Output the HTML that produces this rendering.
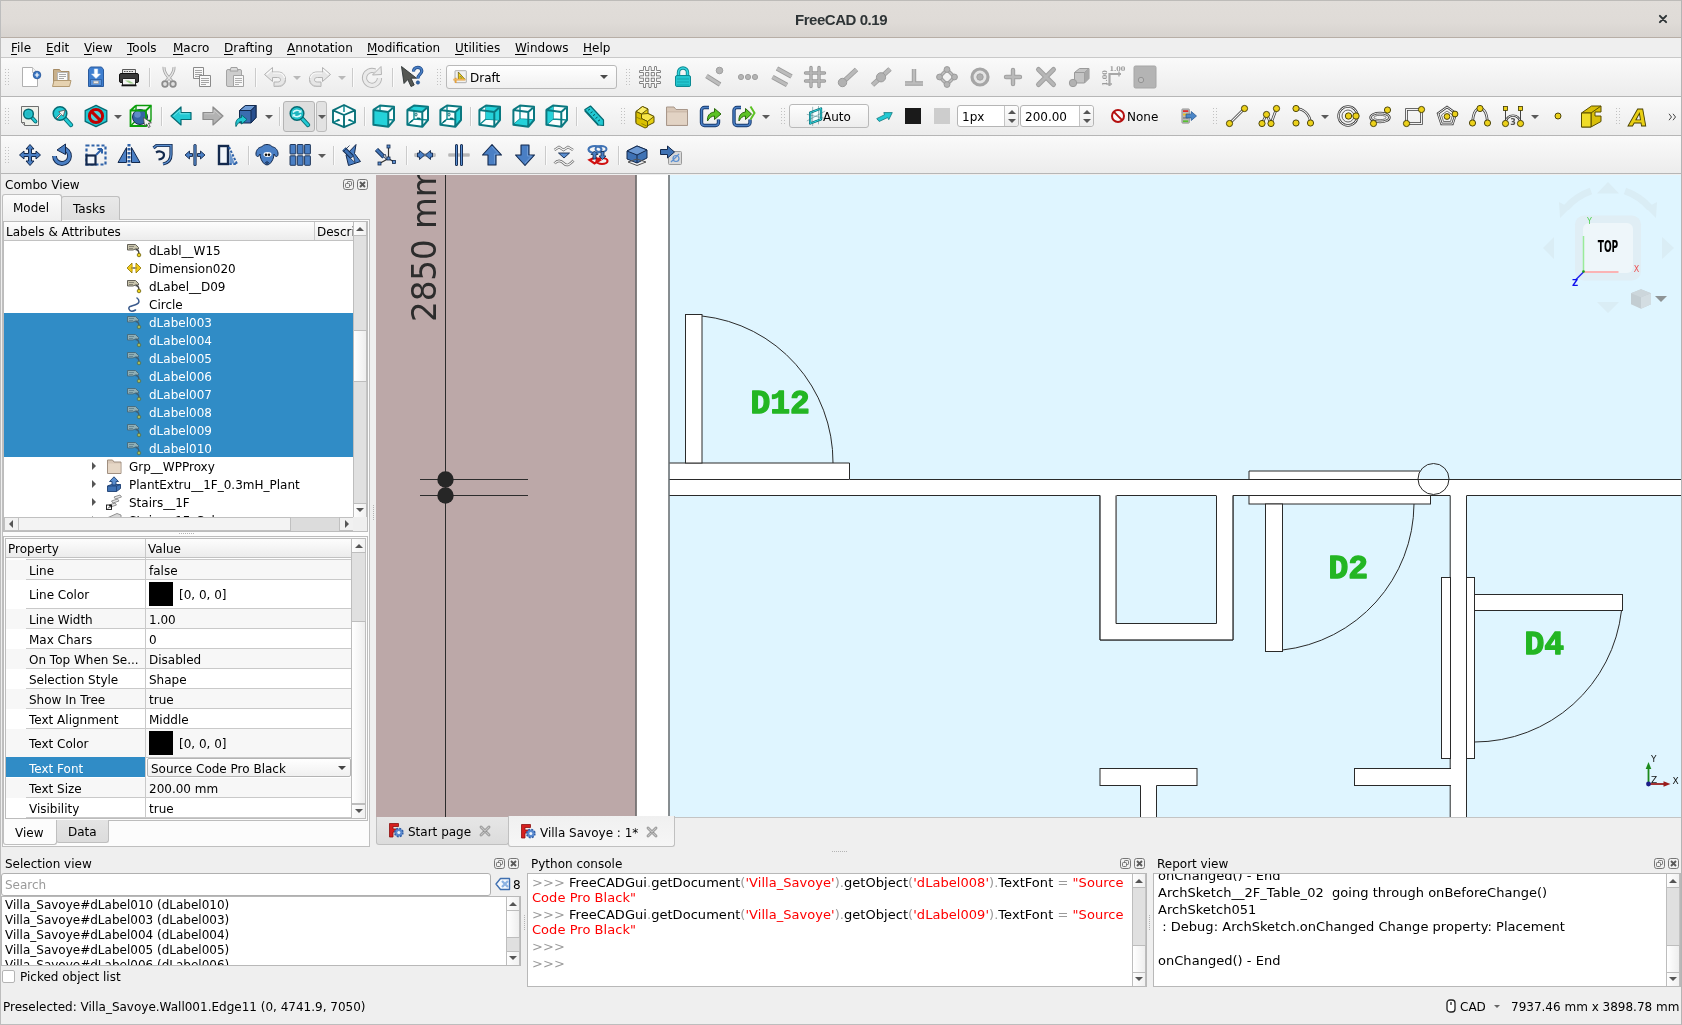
<!DOCTYPE html>
<html lang="en"><head><meta charset="utf-8"><title>FreeCAD 0.19</title>
<style>
*{box-sizing:border-box;margin:0;padding:0}
html,body{width:1682px;height:1025px;overflow:hidden;background:#efefef}
body{position:relative;font-family:"DejaVu Sans","Liberation Sans",sans-serif;font-size:12px;color:#000;line-height:15px;-webkit-font-smoothing:antialiased}
#wrap{position:absolute;left:0;top:0;width:1682px;height:1025px;overflow:hidden;will-change:transform}
.a{position:absolute}
.t{position:absolute;white-space:pre;line-height:15px;height:15px}
u{text-decoration:underline;text-underline-offset:1.5px;text-decoration-thickness:1px}
#title{left:0;top:0;width:1682px;height:38px;background:linear-gradient(#e1ddd9 0,#dfdbd7 60%,#d7d3cf 100%);border-top:1px solid #bdbbb8;border-bottom:1px solid #b7aea6}
#title .tt{left:0;width:1682px;top:10px;text-align:center;font-family:"Liberation Sans","DejaVu Sans",sans-serif;font-weight:bold;font-size:15px;letter-spacing:-0.45px;color:#2e3436;line-height:18px;height:18px}
#menubar{left:0;top:38px;width:1682px;height:20px;background:#efefef;border-bottom:1px solid #c9c9c9}
.tb{left:0;width:1682px;height:39px;background:linear-gradient(#fafafa,#ececec);border-bottom:1px solid #b6b6b6}
.sep{position:absolute;width:2px;height:19px;border-left:1px solid #cbcbcb;border-right:1px solid #fbfbfb}
.hd{position:absolute;width:5px;height:17px;background-image:linear-gradient(90deg,#c2c2c2 1px,transparent 1px,transparent 3px,#c2c2c2 3px,#c2c2c2 4px,transparent 4px);-webkit-mask-image:repeating-linear-gradient(#000 0,#000 1px,transparent 1px,transparent 3px);mask-image:repeating-linear-gradient(#000 0,#000 1px,transparent 1px,transparent 3px)}
.ic{position:absolute;width:24px;height:24px;overflow:visible}
.dd{position:absolute;width:0;height:0;border-left:4px solid transparent;border-right:4px solid transparent;border-top:4px solid #5a5a5a}
.wb{position:absolute;left:0;top:0;width:1682px;height:1025px;border-left:1px solid #bdbdbd;border-right:1px solid #b4b4b4;border-bottom:1px solid #bdbdbd;pointer-events:none;z-index:50}
.btn{position:absolute;border:1px solid #b9b9b9;border-radius:3px;background:linear-gradient(#fefefe,#ededed)}
.inp{position:absolute;border:1px solid #b5b5b5;border-radius:3px;background:#fff}
.frame{position:absolute;border:1px solid #bcbcbc;background:#fff}
</style></head>
<body>
<div id="wrap">
<div id="title" class="a">
<div class="t tt">FreeCAD 0.19</div>
<svg class="a" style="left:1658.2px;top:13.1px" width="10" height="10" viewBox="0 0 10 10"><path d="M1.9 1.9L8.1 8.1M8.1 1.9L1.9 8.1" stroke="#2e3436" stroke-width="2" stroke-linecap="round" fill="none"/></svg></div>
<div id="menubar" class="a">
<span class="t" style="left:11px;top:3px"><u>F</u>ile</span>
<span class="t" style="left:46px;top:3px"><u>E</u>dit</span>
<span class="t" style="left:84px;top:3px"><u>V</u>iew</span>
<span class="t" style="left:127px;top:3px"><u>T</u>ools</span>
<span class="t" style="left:173px;top:3px"><u>M</u>acro</span>
<span class="t" style="left:224px;top:3px"><u>D</u>rafting</span>
<span class="t" style="left:287px;top:3px"><u>A</u>nnotation</span>
<span class="t" style="left:367px;top:3px"><u>M</u>odification</span>
<span class="t" style="left:455px;top:3px"><u>U</u>tilities</span>
<span class="t" style="left:515px;top:3px"><u>W</u>indows</span>
<span class="t" style="left:583px;top:3px"><u>H</u>elp</span></div>
<div class="tb a" style="top:58px">
<div class="hd" style="left:5.0px;top:11.0px"></div>
<svg class="ic" style="left:18.0px;top:7.0px;width:24px;height:24px" viewBox="0 0 24 24"><path d="M4.500 2.500h10l5 5v14h-15z" fill="#fff" stroke="#b0b0b0"/><path d="M14.500 2.500v5h5" fill="#f2f2f2" stroke="#c0c0c0"/><circle cx="19" cy="10" r="3.800" fill="#3b78c4" stroke="#1f4f96" stroke-width=".8"/><path d="M19 7.800v4.400M16.800 10h4.400" stroke="#fff" stroke-width="1.200"/></svg>
<svg class="ic" style="left:50.0px;top:7.0px;width:24px;height:24px" viewBox="0 0 24 24"><path d="M3.5 20.5v-16h6l1.5 2h8v14z" fill="#c8b08c" stroke="#a58b66"/><path d="M7.5 7.5h10v9h-10z" fill="#fafafa" stroke="#b9b9b9"/><path d="M9 9.500h7M9 11.500h7M9 13.500h5" fill="none" stroke="#a8a8a8" stroke-width="1"/><path d="M2.5 21.5l1.5-6h17l-1.500 6z" fill="#e6d2b0" stroke="#b39a72"/></svg>
<svg class="ic" style="left:84.0px;top:7.0px;width:24px;height:24px" viewBox="0 0 24 24"><path d="M4.5 4.500l2-2.500h11l2 2.500v17h-15z" fill="#3f7fd0" stroke="#2a5a9c"/><path d="M6.5 14.500h11v6h-11z" fill="#5b95dd" stroke="#2a5a9c" stroke-width=".8"/><path d="M9.500 16h5v2.500h-5z" fill="#e8e8e8" stroke="#9a9a9a" stroke-width=".7"/><path d="M10.300 4h3.400v5h2.800l-4.500 4.500l-4.500-4.500h2.800z" fill="#fff" stroke="#d8e6f6" stroke-width=".5"/></svg>
<svg class="ic" style="left:117.0px;top:7.0px;width:24px;height:24px" viewBox="0 0 24 24"><path d="M5.500 4.500h13v5h-13z" fill="#e6e6e6" stroke="#5a5a5a"/><path d="M7 6.500h10" stroke="#555" stroke-width="1.2" stroke-dasharray="1.500 1"/><rect x="2.500" y="8.500" width="19" height="9" rx="1.500" fill="#3a3a3a" stroke="#111"/><path d="M5.500 13.500h13v6.500h-13z" fill="#f4f4f4" stroke="#222"/><path d="M8 15.500l5 3h4l-5-3z" fill="#9fd08a"/><path d="M4.500 20.500h15" stroke="#111" stroke-width="1.6"/></svg>
<div class="sep" style="left:149.0px;top:10.0px"></div>
<svg class="ic" style="left:157.0px;top:7.0px;width:24px;height:24px" viewBox="0 0 24 24"><path d="M7 2c-.5 4 2.500 9 8 14M17 2c.5 4-2.500 9-8 14" fill="none" stroke="#9e9e9e" stroke-width="3"/><path d="M7 2c-.5 4 2.500 9 8 14M17 2c.5 4-2.500 9-8 14" fill="none" stroke="#e4e4e4" stroke-width="1.400"/><circle cx="8" cy="19" r="2.800" fill="#e0e0e0" stroke="#8c8c8c" stroke-width="1.800"/><circle cx="16" cy="19" r="2.800" fill="#e0e0e0" stroke="#8c8c8c" stroke-width="1.800"/></svg>
<svg class="ic" style="left:190.0px;top:7.0px;width:24px;height:24px" viewBox="0 0 24 24"><path d="M3.500 2.500h10v11h-10z" fill="#f8f8f8" stroke="#8a8a8a"/><path d="M5 5.500h7M5 7.500h7M5 9.500h7M5 11.500h4" fill="none" stroke="#a4a4a4" stroke-width="1"/><path d="M9.500 10.500h11v11h-11z" fill="#f8f8f8" stroke="#8a8a8a"/><path d="M11 13.500h8M11 15.500h8M11 17.500h8M11 19.500h5" fill="none" stroke="#a4a4a4" stroke-width="1"/></svg>
<svg class="ic" style="left:223.0px;top:7.0px;width:24px;height:24px" viewBox="0 0 24 24"><rect x="3.500" y="4.500" width="15" height="17" rx="1.500" fill="#cdcdcd" stroke="#a4a4a4"/><path d="M8 2.500h6l1 3.500h-8z" fill="#dcdcdc" stroke="#a0a0a0"/><path d="M10.500 10.500h10v11h-10z" fill="#f8f8f8" stroke="#a2a2a2"/><path d="M12 13.500h7M12 15.500h7M12 17.500h7M12 19.500h4" fill="none" stroke="#b0b0b0" stroke-width="1"/></svg>
<div class="sep" style="left:254.5px;top:10.0px"></div>
<svg class="ic" style="left:263.0px;top:7.0px;width:24px;height:24px" viewBox="0 0 24 24"><path d="M9.500 2.500L1.500 9.500L9.500 16.500V12.500H14.500C16.500 12.500 17.500 13.300 17.500 14.800S16.500 17 14.500 17H11V21.500H15C19.500 21.500 22.500 19 22.500 14.500S19.500 7 15 7H9.500Z" fill="#e6e6e6" stroke="#b2b2b2" stroke-width="1" stroke-linejoin="round"/><path d="M9 4.500l-5.500 5M10 8h5c3.500 0 6 2 6.500 5" fill="none" stroke="#fbfbfb" stroke-width="1.200"/><path d="M11.500 21h3.500c4 0 6.500-2 7-5.500" fill="none" stroke="#c6c6c6" stroke-width="1.200"/></svg>
<div class="dd" style="left:293.0px;top:17.5px;border-top-color:#b9b9b9"></div>
<svg class="ic" style="left:308.0px;top:7.0px;width:24px;height:24px" viewBox="0 0 24 24"><g transform="translate(24 0) scale(-1 1)"><path d="M9.500 2.500L1.500 9.500L9.500 16.500V12.500H14.500C16.500 12.500 17.500 13.300 17.500 14.800S16.500 17 14.500 17H11V21.500H15C19.500 21.500 22.500 19 22.500 14.500S19.500 7 15 7H9.500Z" fill="#e6e6e6" stroke="#b2b2b2" stroke-width="1" stroke-linejoin="round"/><path d="M9 4.500l-5.500 5M10 8h5c3.500 0 6 2 6.500 5" fill="none" stroke="#fbfbfb" stroke-width="1.200"/><path d="M11.500 21h3.500c4 0 6.500-2 7-5.500" fill="none" stroke="#c6c6c6" stroke-width="1.200"/></g></svg>
<div class="dd" style="left:338.0px;top:17.5px;border-top-color:#b9b9b9"></div>
<div class="sep" style="left:352.0px;top:10.0px"></div>
<svg class="ic" style="left:360.0px;top:7.0px;width:24px;height:24px" viewBox="0 0 24 24"><path d="M19.500 13a7.500 7.500 0 1 1-4.500-7" fill="none" stroke="#b4b4b4" stroke-width="5.200"/><path d="M19.500 13a7.500 7.500 0 1 1-4.500-7" fill="none" stroke="#eaeaea" stroke-width="3.400"/><path d="M12.500 10l9-.5l-.5-8z" fill="#eaeaea" stroke="#b4b4b4" stroke-width="1" stroke-linejoin="round"/></svg>
<div class="sep" style="left:392.0px;top:10.0px"></div>
<svg class="ic" style="left:399.0px;top:7.0px;width:24px;height:24px" viewBox="0 0 24 24"><path d="M2.500 1.500l2.500 17l3.800-4l3.200 7l3.200-1.500l-3.200-6.800h5.500z" fill="#555753" stroke="#2e3436" stroke-width=".9" stroke-linejoin="round"/><path d="M14.500 6.500c0-2.600 1.800-4.200 4.200-4.200s4.100 1.500 4.100 3.700c0 3.200-3.900 3.200-3.900 7.500" fill="none" stroke="#1f4a87" stroke-width="3.200"/><path d="M14.500 6.500c0-2.600 1.800-4.200 4.200-4.200s4.100 1.500 4.100 3.700c0 3.200-3.900 3.200-3.900 7.500" fill="none" stroke="#4a7fc4" stroke-width="1.700"/><circle cx="18.900" cy="17.500" r="1.700" fill="#3465a4" stroke="#1f4a87" stroke-width=".6"/></svg>
<div class="hd" style="left:437.0px;top:11.0px"></div>
<div class="btn" style="left:446px;top:7px;width:171px;height:24px;background:linear-gradient(#ffffff,#f0f0f0)">
<svg class="a" style="left:5px;top:3px" width="16" height="16" viewBox="0 0 24 24"><rect x="4.500" y="2.500" width="17" height="18" rx="1" fill="#f1f1f1" stroke="#8c8c8c"/><path d="M9.500 4.500v11h10z" fill="#f4d31c" stroke="#5a4f00" stroke-width="1"/><path d="M12.300 10.500v3h2.800z" fill="#fff" stroke="#5a4f00" stroke-width=".7"/><path d="M2 16h18M5.500 13v8" stroke="#e6a23c" stroke-width="2.600"/><path d="M2 16h18" stroke="#f6c98a" stroke-width=".8"/></svg>
<span class="t" style="left:23px;top:5px">Draft</span>
<div class="dd" style="left:153px;top:9px;border-left-width:4px;border-right-width:4px;border-top-width:4px;border-top-color:#4a4a4a"></div></div>
<div class="hd" style="left:626.0px;top:11.0px"></div>
<svg class="ic" style="left:638.0px;top:7.0px;width:24px;height:24px" viewBox="0 0 24 24"><path d="M6.500 2.500v19M12 2.500v19M17.500 2.500v19M2.500 6.500h19M2.500 12h19M2.500 17.500h19" stroke="#5c5c5c" stroke-width="3" stroke-linecap="round"/><path d="M6.500 2.500v19M12 2.500v19M17.500 2.500v19M2.500 6.500h19M2.500 12h19M2.500 17.500h19" stroke="#fbfbfb" stroke-width="1.600" stroke-linecap="round"/></svg>
<svg class="ic" style="left:671.0px;top:7.0px;width:24px;height:24px" viewBox="0 0 24 24"><path d="M7.500 11v-3.500a4.500 4.500 0 0 1 9 0v3.500" fill="none" stroke="#0b8a93" stroke-width="3.400"/><path d="M7.500 11v-3.500a4.500 4.500 0 0 1 9 0v3.500" fill="none" stroke="#35d6df" stroke-width="1.600"/><rect x="4.500" y="10.500" width="15" height="11" rx="1.500" fill="#23c6cf" stroke="#0b8a93"/><path d="M6 14h12M6 17h12M6 20h12" stroke="#14a5ae" stroke-width="1"/></svg>
<svg class="ic" style="left:703.0px;top:7.0px;width:24px;height:24px" viewBox="0 0 24 24"><path d="M3.500 11l13.500 8.500" stroke="#9a9a9a" stroke-width="4.800" stroke-linecap="butt"/><path d="M3.500 11l13.500 8.500" stroke="#bdbdbd" stroke-width="3"/><circle cx="16.500" cy="5.500" r="3.300" fill="#b5b5b5" stroke="#a0a0a0"/></svg>
<svg class="ic" style="left:736.0px;top:7.0px;width:24px;height:24px" viewBox="0 0 24 24"><circle cx="5" cy="12" r="2.600" fill="#b5b5b5" stroke="#a0a0a0"/><circle cx="12" cy="12" r="2.600" fill="#b5b5b5" stroke="#a0a0a0"/><circle cx="19" cy="12" r="2.600" fill="#b5b5b5" stroke="#a0a0a0"/></svg>
<svg class="ic" style="left:770.0px;top:7.0px;width:24px;height:24px" viewBox="0 0 24 24"><path d="M7 3.500l14.500 8M2.500 12l14.500 8" stroke="#9c9c9c" stroke-width="4.800"/><path d="M7 3.500l14.500 8M2.500 12l14.500 8" stroke="#bcbcbc" stroke-width="3"/></svg>
<svg class="ic" style="left:803.0px;top:7.0px;width:24px;height:24px" viewBox="0 0 24 24"><path d="M8 2.500v19M16 2.500v19M2.500 8h19M2.500 16h19" stroke="#9a9a9a" stroke-width="3.400" stroke-linecap="round"/><path d="M8 2.500v19M16 2.500v19M2.500 8h19M2.500 16h19" stroke="#b8b8b8" stroke-width="1.600" stroke-linecap="round"/></svg>
<svg class="ic" style="left:836.0px;top:7.0px;width:24px;height:24px" viewBox="0 0 24 24"><path d="M7 17l13.500-12.500" stroke="#9c9c9c" stroke-width="5"/><path d="M7 17l13.500-12.500" stroke="#b9b9b9" stroke-width="3.200"/><circle cx="6.500" cy="17.500" r="4.200" fill="#b2b2b2" stroke="#9c9c9c"/></svg>
<svg class="ic" style="left:869.0px;top:7.0px;width:24px;height:24px" viewBox="0 0 24 24"><path d="M3.500 20l17.500-16" stroke="#9c9c9c" stroke-width="5"/><path d="M3.500 20l17.500-16" stroke="#b9b9b9" stroke-width="3.200"/><circle cx="12" cy="12.300" r="4.600" fill="#b2b2b2" stroke="#9c9c9c"/></svg>
<svg class="ic" style="left:902.0px;top:7.0px;width:24px;height:24px" viewBox="0 0 24 24"><path d="M12 4v14M3 18.500h18" stroke="#9c9c9c" stroke-width="4.400"/><path d="M12 4v14M3 18.500h18" stroke="#bcbcbc" stroke-width="2.600"/></svg>
<svg class="ic" style="left:935.0px;top:7.0px;width:24px;height:24px" viewBox="0 0 24 24"><path d="M12 4.500l7.500 7.500l-7.500 7.500l-7.500-7.500z" fill="none" stroke="#9c9c9c" stroke-width="3.400"/><path d="M12 4.500l7.500 7.500l-7.500 7.500l-7.500-7.500z" fill="none" stroke="#bdbdbd" stroke-width="1.600"/><circle cx="12" cy="4.500" r="2.900" fill="#b5b5b5" stroke="#9c9c9c"/><circle cx="19.500" cy="12" r="2.900" fill="#b5b5b5" stroke="#9c9c9c"/><circle cx="12" cy="19.500" r="2.900" fill="#b5b5b5" stroke="#9c9c9c"/><circle cx="4.500" cy="12" r="2.900" fill="#b5b5b5" stroke="#9c9c9c"/></svg>
<svg class="ic" style="left:968.0px;top:7.0px;width:24px;height:24px" viewBox="0 0 24 24"><circle cx="12" cy="12" r="8" fill="#e4e4e4" stroke="#a6a6a6" stroke-width="3.200"/><circle cx="12" cy="12" r="3.200" fill="#b0b0b0" stroke="#a0a0a0"/></svg>
<svg class="ic" style="left:1001.0px;top:7.0px;width:24px;height:24px" viewBox="0 0 24 24"><path d="M12 5v14M5 12h14" stroke="#a0a0a0" stroke-width="4.400" stroke-linecap="round"/><path d="M12 5v14M5 12h14" stroke="#bababa" stroke-width="2.400" stroke-linecap="round"/></svg>
<svg class="ic" style="left:1034.0px;top:7.0px;width:24px;height:24px" viewBox="0 0 24 24"><path d="M4.500 4.500l15 15M19.500 4.500l-15 15" stroke="#a0a0a0" stroke-width="5" stroke-linecap="round"/><path d="M4.500 4.500l15 15M19.500 4.500l-15 15" stroke="#b6b6b6" stroke-width="3" stroke-linecap="round"/></svg>
<svg class="ic" style="left:1067.0px;top:7.0px;width:24px;height:24px" viewBox="0 0 24 24"><path d="M7.500 7.500l5-4h9.500v10l-4.500 4.500h-10z" fill="#c4c4c4" stroke="#9a9a9a"/><path d="M7.500 7.500h10v10.500M17.500 7.500l4.500-4" fill="none" stroke="#9a9a9a"/><path d="M17.500 7.500l4.500-4v10l-4.500 4.500z" fill="#a8a8a8"/><circle cx="6" cy="18" r="3.700" fill="#b2b2b2" stroke="#9c9c9c"/></svg>
<svg class="ic" style="left:1100.0px;top:7.0px;width:24px;height:24px" viewBox="0 0 24 24"><path d="M9.500 21v-12h11.500M9.500 9l0 0" fill="none" stroke="#a8a8a8" stroke-width="2.200"/><path d="M7 19h5M19 6.500v5" stroke="#a8a8a8" stroke-width="1.400"/><text x="9.500" y="6" font-size="6.500" font-weight="bold" fill="#9a9a9a" font-family="DejaVu Serif,Liberation Serif,serif">1.00</text><text transform="translate(6.500 21) rotate(-90)" font-size="6.500" font-weight="bold" fill="#9a9a9a" font-family="DejaVu Serif,Liberation Serif,serif">1.00</text></svg>
<svg class="ic" style="left:1133.0px;top:7.0px;width:24px;height:24px" viewBox="0 0 24 24"><rect x="1" y="1" width="22" height="22" rx="1.500" fill="#b4b4b4" stroke="#a6a6a6"/><circle cx="8" cy="15" r="2.700" fill="#bdbdbd" stroke="#8e8e8e" stroke-width=".9"/></svg></div>
<div class="tb a" style="top:97px">
<div class="hd" style="left:5.0px;top:11.0px"></div>
<svg class="ic" style="left:18.0px;top:7.0px;width:24px;height:24px" viewBox="0 0 24 24"><path d="M3.500 2.500h17v19h-14l-3-3z" fill="#eef0ea" stroke="#6f6f6f"/><path d="M3.500 18.500h3v3" fill="#d0d0d0" stroke="#6f6f6f"/><path d="M13.9 13.4L17.5 17.5" stroke="#066a72" stroke-width="3.8" stroke-linecap="round"/><path d="M13.9 13.4L17.5 17.5" stroke="#22c9d3" stroke-width="2.0" stroke-linecap="round"/><circle cx="10.5" cy="10.0" r="4.8" fill="#22c9d3" stroke="#066a72" stroke-width="1.500"/><circle cx="10.500" cy="10" r="2.800" fill="#24b9c3"/></svg>
<svg class="ic" style="left:50.0px;top:7.0px;width:24px;height:24px" viewBox="0 0 24 24"><path d="M14.8 14.3L21.0 21.0" stroke="#066a72" stroke-width="4.4" stroke-linecap="round"/><path d="M14.8 14.3L21.0 21.0" stroke="#22c9d3" stroke-width="2.6" stroke-linecap="round"/><circle cx="10.0" cy="9.5" r="6.8" fill="#22c9d3" stroke="#066a72" stroke-width="1.500"/><path d="M6 14l4.500-4.500l-1.800-1.800l6.300-1.700l-1.700 6.300l-1.800-1.800l-4.500 4.500z" fill="#f2f2f2" stroke="#555" stroke-width=".8"/></svg>
<svg class="ic" style="left:84.0px;top:7.0px;width:24px;height:24px" viewBox="0 0 24 24"><path d="M12 1.300l10.800 5.300v10.800l-10.800 5.300l-10.800-5.300v-10.800z" fill="#22c9d3" stroke="#066a72" stroke-width="1.300" stroke-linejoin="round"/><circle cx="12" cy="12" r="6.600" fill="#fff" fill-opacity=".2" stroke="#c00000" stroke-width="3"/><path d="M7.400 7.400l9.200 9.200" stroke="#c00000" stroke-width="3"/></svg>
<div class="dd" style="left:114.0px;top:17.5px"></div>
<svg class="ic" style="left:129.0px;top:7.0px;width:24px;height:24px" viewBox="0 0 24 24"><path d="M7 1.500h15v15M7 1.500v15h15M7 16.500l-5.500 5.500" fill="none" stroke="#0a9a0a" stroke-width="1.400"/><circle cx="11" cy="13" r="7.500" fill="#3465a4" stroke="#162d50" stroke-width="1"/><circle cx="8.500" cy="10.500" r="3.200" fill="#6d9ad4" fill-opacity=".75"/><path d="M1.500 6.500h15.500v15.500h-15.500zM1.500 6.500l5.500-5M17 6.500l5-5M17 22l5-5.500" fill="none" stroke="#0aa00a" stroke-width="1.800"/><path d="M14.500 13.500l1 8.500l2.200-2l1.800 3.500l1.700-.9l-1.800-3.400l3-.4z" fill="#f4f4f4" stroke="#444" stroke-width=".8"/></svg>
<div class="sep" style="left:160.5px;top:10.0px"></div>
<svg class="ic" style="left:169.0px;top:7.0px;width:24px;height:24px" viewBox="0 0 24 24"><path d="M2 12l10-9v5.500h10v7h-10v5.500z" fill="#22c9d3" stroke="#066a72" stroke-width="1.200" stroke-linejoin="round"/><path d="M4.500 12l6.500-5.800v3.600h9.500" fill="none" stroke="#7fe6ec" stroke-width="1" opacity=".8"/></svg>
<svg class="ic" style="left:201.0px;top:7.0px;width:24px;height:24px" viewBox="0 0 24 24"><path d="M22 12l-10-9v5.500h-10v7h10v5.500z" fill="#b2b2b2" stroke="#8c8c8c" stroke-width="1.200" stroke-linejoin="round"/><path d="M19.500 12l-6.500-5.800v3.600h-9.500" fill="none" stroke="#d0d0d0" stroke-width="1" opacity=".8"/></svg>
<svg class="ic" style="left:234.0px;top:7.0px;width:24px;height:24px" viewBox="0 0 24 24"><path d="M5.500 6.500l6-5h10.500v12l-5 5.500h-11.500z" fill="#3a6db0" stroke="#13294d" stroke-width="1" stroke-linejoin="round"/><path d="M5.500 6.500l6-5h10.500l-5 5z" fill="#6d9ad4" stroke="#13294d" stroke-width="1" stroke-linejoin="round"/><path d="M17 6.500l5-5v12l-5 5.500z" fill="#274f8f" stroke="#13294d" stroke-width="1" stroke-linejoin="round"/><path d="M2 22.500c-1-5 1-8.500 5.500-9v-2.500l5.500 4.500l-5.500 4.500v-2.500c-2.500.3-3.500 1.500-5.500 5z" fill="#22c9d3" stroke="#066a72" stroke-width="1" stroke-linejoin="round"/></svg>
<div class="dd" style="left:265.0px;top:17.5px"></div>
<div class="sep" style="left:278.5px;top:10.0px"></div>
<div class="a" style="left:283px;top:4px;width:32px;height:31px;border:1px solid #b4b4b4;border-radius:3px;background:#dedede"></div>
<div class="a" style="left:316px;top:4px;width:11px;height:31px;border:1px solid #bcbcbc;border-radius:3px;background:#e2e2e2"></div>
<svg class="ic" style="left:287.0px;top:7.0px;width:24px;height:24px" viewBox="0 0 24 24"><path d="M14.8 14.3L21.0 21.0" stroke="#066a72" stroke-width="4.4" stroke-linecap="round"/><path d="M14.8 14.3L21.0 21.0" stroke="#22c9d3" stroke-width="2.6" stroke-linecap="round"/><circle cx="10.0" cy="9.5" r="6.8" fill="#22c9d3" stroke="#066a72" stroke-width="1.500"/><circle cx="10" cy="9.500" r="5" fill="#1fb6c0"/><path d="M6 8.500c1.500-2.500 5-3 7.500-.8M14 10.500c-1.500 2.500-5 3-7.500.8" fill="none" stroke="#d6fbfd" stroke-width="1.600"/><path d="M14.500 5.500v3.200h-3.200zM5.500 13.500v-3.200h3.200z" fill="#d6fbfd"/></svg>
<div class="dd" style="left:317.5px;top:17.5px"></div>
<svg class="ic" style="left:332.0px;top:7.0px;width:24px;height:24px" viewBox="0 0 24 24"><path d="M12 1L23 6.300V18.500L12 23.200L1 18.500V6.300z" fill="#fbffff"/><path d="M12 1.500V8M1.500 18.500L7 15.500M22.500 18.500L17 15.500" stroke="#0c8d95" stroke-width="1.500"/><path d="M12 1L23 6.300V18.500L12 23.200L1 18.500V6.300zM1 6.300L12 11L23 6.300M12 11V23.200" fill="none" stroke="#087078" stroke-width="1.900" stroke-linejoin="round"/><path d="M5.500 16.800l1.800-.8M16.800 16l1.800.6" stroke="#066a72" stroke-width="1.500" stroke-linecap="round"/></svg>
<div class="sep" style="left:363.5px;top:10.0px"></div>
<svg class="ic" style="left:371.0px;top:7.0px;width:24px;height:24px" viewBox="0 0 24 24"><path d="M2.4 5.9L9.0 1.5L23.0 2.8L23.0 16.0L17.3 22.8L2.4 20.8z" fill="#fbffff"/><path d="M9.0 1.5L9.0 15.0M9.0 15.0L2.4 20.8M9.0 15.0L23.0 16.0" fill="none" stroke="#0c8d95" stroke-width="1.400"/><path d="M2.4 5.9L17.3 7.9L17.3 22.8L2.4 20.8z" fill="#25d2da"/><path d="M2.4 5.9L17.3 7.9L17.3 22.8L2.4 20.8zM2.4 5.9L9.0 1.5L23.0 2.8L17.3 7.9M23.0 2.8L23.0 16.0L17.3 22.8M17.3 7.9L17.3 22.8" fill="none" stroke="#0a7880" stroke-width="2" stroke-linejoin="round"/></svg>
<svg class="ic" style="left:405.0px;top:7.0px;width:24px;height:24px" viewBox="0 0 24 24"><path d="M2.4 5.9L9.0 1.5L23.0 2.8L23.0 16.0L17.3 22.8L2.4 20.8z" fill="#fbffff"/><path d="M9.0 1.5L9.0 15.0M9.0 15.0L2.4 20.8M9.0 15.0L23.0 16.0" fill="none" stroke="#0c8d95" stroke-width="1.400"/><path d="M2.4 5.9L9.0 1.5L23.0 2.8L17.3 7.9z" fill="#25d2da"/><ellipse cx="11" cy="10.500" rx="1" ry="1.600" fill="none" stroke="#066a72" stroke-width="1"/><path d="M5.500 18l1.800-1.300M12.500 14.300l2.300.3" stroke="#066a72" stroke-width="1.500" stroke-linecap="round"/><path d="M2.4 5.9L17.3 7.9L17.3 22.8L2.4 20.8zM2.4 5.9L9.0 1.5L23.0 2.8L17.3 7.9M23.0 2.8L23.0 16.0L17.3 22.8M17.3 7.9L17.3 22.8" fill="none" stroke="#0a7880" stroke-width="2" stroke-linejoin="round"/></svg>
<svg class="ic" style="left:438.0px;top:7.0px;width:24px;height:24px" viewBox="0 0 24 24"><path d="M2.4 5.9L9.0 1.5L23.0 2.8L23.0 16.0L17.3 22.8L2.4 20.8z" fill="#fbffff"/><path d="M9.0 1.5L9.0 15.0M9.0 15.0L2.4 20.8M9.0 15.0L23.0 16.0" fill="none" stroke="#0c8d95" stroke-width="1.400"/><path d="M17.3 7.9L23.0 2.8L23.0 16.0L17.3 22.8z" fill="#25d2da"/><ellipse cx="11" cy="10.500" rx="1" ry="1.600" fill="none" stroke="#066a72" stroke-width="1"/><path d="M5.500 18l1.800-1.300M12.500 14.300l2.300.3" stroke="#066a72" stroke-width="1.500" stroke-linecap="round"/><path d="M2.4 5.9L17.3 7.9L17.3 22.8L2.4 20.8zM2.4 5.9L9.0 1.5L23.0 2.8L17.3 7.9M23.0 2.8L23.0 16.0L17.3 22.8M17.3 7.9L17.3 22.8" fill="none" stroke="#0a7880" stroke-width="2" stroke-linejoin="round"/></svg>
<div class="sep" style="left:469.5px;top:10.0px"></div>
<svg class="ic" style="left:477.0px;top:7.0px;width:24px;height:24px" viewBox="0 0 24 24"><path d="M2.4 5.9L9.0 1.5L23.0 2.8L23.0 16.0L17.3 22.8L2.4 20.8z" fill="#fbffff"/><path d="M9.0 1.5L9.0 15.0M9.0 15.0L2.4 20.8M9.0 15.0L23.0 16.0" fill="none" stroke="#0c8d95" stroke-width="1.400"/><path d="M9.0 1.5L23.0 2.8L23.0 16.0L9.0 15.0z" fill="#25d2da"/><path d="M2.4 5.9L17.3 7.9L17.3 22.8L2.4 20.8zM2.4 5.9L9.0 1.5L23.0 2.8L17.3 7.9M23.0 2.8L23.0 16.0L17.3 22.8M17.3 7.9L17.3 22.8" fill="none" stroke="#0a7880" stroke-width="2" stroke-linejoin="round"/></svg>
<svg class="ic" style="left:511.0px;top:7.0px;width:24px;height:24px" viewBox="0 0 24 24"><path d="M2.4 5.9L9.0 1.5L23.0 2.8L23.0 16.0L17.3 22.8L2.4 20.8z" fill="#fbffff"/><path d="M9.0 1.5L9.0 15.0M9.0 15.0L2.4 20.8M9.0 15.0L23.0 16.0" fill="none" stroke="#0c8d95" stroke-width="1.400"/><path d="M2.4 20.8L17.3 22.8L23.0 16.0L9.0 15.0z" fill="#25d2da"/><path d="M2.4 5.9L17.3 7.9L17.3 22.8L2.4 20.8zM2.4 5.9L9.0 1.5L23.0 2.8L17.3 7.9M23.0 2.8L23.0 16.0L17.3 22.8M17.3 7.9L17.3 22.8" fill="none" stroke="#0a7880" stroke-width="2" stroke-linejoin="round"/></svg>
<svg class="ic" style="left:544.0px;top:7.0px;width:24px;height:24px" viewBox="0 0 24 24"><path d="M2.4 5.9L9.0 1.5L23.0 2.8L23.0 16.0L17.3 22.8L2.4 20.8z" fill="#fbffff"/><path d="M9.0 1.5L9.0 15.0M9.0 15.0L2.4 20.8M9.0 15.0L23.0 16.0" fill="none" stroke="#0c8d95" stroke-width="1.400"/><path d="M2.4 5.9L9.0 1.5L9.0 15.0L2.4 20.8z" fill="#25d2da"/><path d="M2.4 5.9L17.3 7.9L17.3 22.8L2.4 20.8zM2.4 5.9L9.0 1.5L23.0 2.8L17.3 7.9M23.0 2.8L23.0 16.0L17.3 22.8M17.3 7.9L17.3 22.8" fill="none" stroke="#0a7880" stroke-width="2" stroke-linejoin="round"/></svg>
<div class="sep" style="left:575.5px;top:10.0px"></div>
<svg class="ic" style="left:582.0px;top:7.0px;width:24px;height:24px" viewBox="0 0 24 24"><path d="M3 5.500l5.500-3.500l13 14v5.500l-5.500-.5l-13-14z" fill="#22c9d3" stroke="#066a72" stroke-width="1.200" stroke-linejoin="round"/><path d="M3 5.500l13 14.500v1.500" fill="none" stroke="#066a72" stroke-width="1"/><path d="M8 5l-2 1.300M10.500 7.700l-2 1.300M13 10.400l-2 1.300M15.500 13.100l-2 1.300M18 15.800l-2 1.300" stroke="#06555b" stroke-width="1"/></svg>
<div class="hd" style="left:621.0px;top:11.0px"></div>
<svg class="ic" style="left:632.0px;top:7.0px;width:24px;height:24px" viewBox="0 0 24 24"><path d="M4 7.500l6.500-5l5.500 2.500v4.500l6 3v6l-9 4.500l-9-4.500z" fill="#e6cf10" stroke="#5a4f00" stroke-width="1" stroke-linejoin="round"/><path d="M4 7.500l6.500-5l5.500 2.500l-6.500 5z" fill="#fbee6a" stroke="#5a4f00" stroke-width=".9" stroke-linejoin="round"/><path d="M9.500 10v4.500l6 3l6.500-5l-6-3l-6.500 .5z" fill="#f7e64a" stroke="#5a4f00" stroke-width=".9" stroke-linejoin="round"/><path d="M4 7.500l5.500 2.500v4.500l6 3v5.500l-2.500 1l-9-4.500z" fill="#d9c000" stroke="#5a4f00" stroke-width=".9" stroke-linejoin="round"/><path d="M4 13l5.500 2.500M9.500 19.500l6 3" stroke="#8a7a00" stroke-width=".8"/></svg>
<svg class="ic" style="left:665.0px;top:7.0px;width:24px;height:24px" viewBox="0 0 24 24"><path d="M1.500 21.500v-18.500h7.500l2 2.500h11.500v16z" fill="#d9c8b8" stroke="#a8978a" stroke-linejoin="round"/><path d="M2 8h20" stroke="#c4b2a2" stroke-width="1"/><path d="M2.500 8.500h19.500v12h-19.500z" fill="#e2d3c4"/></svg>
<svg class="ic" style="left:698.0px;top:7.0px;width:24px;height:24px" viewBox="0 0 24 24"><path d="M11 3.500h-4.500a3 3 0 0 0-3 3v12a3 3 0 0 0 3 3h11a3 3 0 0 0 3-3v-3" fill="none" stroke="#173a6e" stroke-width="3.400"/><path d="M11 3.500h-4.500a3 3 0 0 0-3 3v12a3 3 0 0 0 3 3h11a3 3 0 0 0 3-3v-3" fill="none" stroke="#4a7fc4" stroke-width="1.500"/><path d="M9.500 17c-.5-5 2-8.500 7-9v-3.500l6.500 5.500l-6.500 5.500v-3.500c-3 .2-5 1.500-7 5z" fill="#5cc224" stroke="#2c6b0c" stroke-width="1" stroke-linejoin="round"/></svg>
<svg class="ic" style="left:731.0px;top:7.0px;width:24px;height:24px" viewBox="0 0 24 24"><path d="M10 3.500h-4a3 3 0 0 0-3 3v12a3 3 0 0 0 3 3h10a3 3 0 0 0 3-3v-3" fill="none" stroke="#173a6e" stroke-width="3.400"/><path d="M10 3.500h-4a3 3 0 0 0-3 3v12a3 3 0 0 0 3 3h10a3 3 0 0 0 3-3v-3" fill="none" stroke="#4a7fc4" stroke-width="1.500"/><path d="M8 17c-.5-5 2-8.500 6.500-9v-3.500l6 5.500l-6 5.500v-3.500c-3 .2-4.500 1.500-6.500 5z" fill="#5cc224" stroke="#2c6b0c" stroke-width="1" stroke-linejoin="round"/><path d="M19.500 2.500l4 6.500l-4 6.500" fill="none" stroke="#5cc224" stroke-width="2"/></svg>
<div class="dd" style="left:762.0px;top:17.5px"></div>
<div class="hd" style="left:781.0px;top:11.0px"></div>
<div class="btn" style="left:789px;top:7px;width:80px;height:24px">
<svg class="a" style="left:16px;top:1px" width="20" height="20" viewBox="0 0 24 24"><path d="M5 8l13-5v13l-13 5z" fill="#f4feff" stroke="#066a72" stroke-width="2.800" stroke-linejoin="round"/><path d="M5 8l13-5v13l-13 5z" fill="none" stroke="#35dde6" stroke-width="1.200"/><path d="M1 10l22 5M1 18l22-12M8 1v23M15 0v22" stroke="#3a7a80" stroke-width=".6"/></svg>
<span class="t" style="left:33px;top:4.500px">Auto</span></div>
<svg class="ic" style="left:875.5px;top:10.5px;width:17px;height:17px" viewBox="0 0 24 24"><path d="M1 15l11-5.500l-1-3l12 0l-5 10l-1.500-3l-12 5.500z" fill="#22c9d3" stroke="#066a72" stroke-width="1" stroke-linejoin="round"/></svg>
<div class="a" style="left:905px;top:11px;width:16px;height:16px;background:#1a1a1a"></div>
<div class="a" style="left:934px;top:11px;width:16px;height:16px;background:#cdcdcd"></div>
<div class="inp" style="left:957px;top:8px;width:62px;height:22px">
<span class="t" style="left:4px;top:3.500px">1px</span>
<div class="a" style="right:0;top:0;width:14px;height:20px;border-left:1px solid #c4c4c4;background:linear-gradient(#fdfdfd,#ededed);border-radius:0 3px 3px 0">
<div class="a" style="left:3px;top:4px;width:0;height:0;border-left:4px solid transparent;border-right:4px solid transparent;border-bottom:4px solid #555"></div>
<div class="a" style="left:3px;top:13px;width:0;height:0;border-left:4px solid transparent;border-right:4px solid transparent;border-top:4px solid #555"></div></div></div>
<div class="inp" style="left:1020px;top:8px;width:74px;height:22px">
<span class="t" style="left:4px;top:3.500px">200.00</span>
<div class="a" style="right:0;top:0;width:14px;height:20px;border-left:1px solid #c4c4c4;background:linear-gradient(#fdfdfd,#ededed);border-radius:0 3px 3px 0">
<div class="a" style="left:3px;top:4px;width:0;height:0;border-left:4px solid transparent;border-right:4px solid transparent;border-bottom:4px solid #555"></div>
<div class="a" style="left:3px;top:13px;width:0;height:0;border-left:4px solid transparent;border-right:4px solid transparent;border-top:4px solid #555"></div></div></div>
<svg class="ic" style="left:1110.0px;top:11.0px;width:16px;height:16px" viewBox="0 0 24 24"><circle cx="12" cy="12" r="9" fill="#fff" fill-opacity=".6" stroke="#b40f0f" stroke-width="3"/><path d="M5.500 5.500l13 13" stroke="#b40f0f" stroke-width="3"/></svg>
<span class="t" style="left:1127px;top:12.500px">None</span>
<svg class="ic" style="left:1180.0px;top:10.0px;width:18px;height:18px" viewBox="0 0 24 24"><rect x="2.500" y="2.500" width="10" height="19" rx="1" fill="#b9b9b9" stroke="#8a8a8a"/><path d="M4 5.500h7" stroke="#e02a2a" stroke-width="2.400"/><path d="M4 10h7" stroke="#f0c020" stroke-width="2.400"/><path d="M4 14.500h7" stroke="#8a8a8a" stroke-width="2.400"/><path d="M4 19h7" stroke="#58c030" stroke-width="2.400"/><path d="M8 9.500h7v-3.500l7 6l-7 6v-3.500h-7z" fill="#4a86c8" stroke="#27568f" stroke-width="1"/></svg>
<div class="hd" style="left:1213.0px;top:11.0px"></div>
<svg class="ic" style="left:1225.0px;top:7.0px;width:24px;height:24px" viewBox="0 0 24 24"><path d="M4.500 19.500L19.500 4.500" fill="none" stroke="#3c3c3c" stroke-width="2.6"/><path d="M4.500 19.500L19.500 4.500" fill="none" stroke="#f2f2f2" stroke-width="1.1"/><circle cx="4.5" cy="19.5" r="3.1" fill="#ecd11a" stroke="#3c3500" stroke-width=".9"/><circle cx="19.5" cy="4.5" r="3.1" fill="#ecd11a" stroke="#3c3500" stroke-width=".9"/></svg>
<svg class="ic" style="left:1258.0px;top:7.0px;width:24px;height:24px" viewBox="0 0 24 24"><path d="M4 19.500L8.500 10.500L13 19.500L18.500 4.500" fill="none" stroke="#3c3c3c" stroke-width="2.6"/><path d="M4 19.500L8.500 10.500L13 19.500L18.500 4.500" fill="none" stroke="#f2f2f2" stroke-width="1.1"/><circle cx="4.0" cy="19.5" r="3.1" fill="#ecd11a" stroke="#3c3500" stroke-width=".9"/><circle cx="8.5" cy="10.5" r="3.1" fill="#ecd11a" stroke="#3c3500" stroke-width=".9"/><circle cx="13.0" cy="19.5" r="3.1" fill="#ecd11a" stroke="#3c3500" stroke-width=".9"/><circle cx="18.5" cy="4.5" r="3.1" fill="#ecd11a" stroke="#3c3500" stroke-width=".9"/></svg>
<svg class="ic" style="left:1291.0px;top:7.0px;width:24px;height:24px" viewBox="0 0 24 24"><path d="M5 4.500C12 4.500 19 10 19.500 19" fill="none" stroke="#3c3c3c" stroke-width="2.6"/><path d="M5 4.500C12 4.500 19 10 19.500 19" fill="none" stroke="#f2f2f2" stroke-width="1.1"/><circle cx="5.0" cy="4.5" r="3.1" fill="#ecd11a" stroke="#3c3500" stroke-width=".9"/><circle cx="5.0" cy="19.0" r="3.1" fill="#ecd11a" stroke="#3c3500" stroke-width=".9"/><circle cx="19.5" cy="19.0" r="3.1" fill="#ecd11a" stroke="#3c3500" stroke-width=".9"/></svg>
<div class="dd" style="left:1321.0px;top:17.5px"></div>
<svg class="ic" style="left:1336.0px;top:7.0px;width:24px;height:24px" viewBox="0 0 24 24"><circle cx="12" cy="12" r="9.500" fill="none" stroke="#3c3c3c" stroke-width="2.400"/><circle cx="12" cy="12" r="9.500" fill="none" stroke="#f2f2f2" stroke-width="1"/><circle cx="12" cy="12" r="6" fill="none" stroke="#555" stroke-width=".9"/><circle cx="12.5" cy="12.0" r="3.2" fill="#ecd11a" stroke="#3c3500" stroke-width=".9"/><circle cx="20.0" cy="12.0" r="3.2" fill="#ecd11a" stroke="#3c3500" stroke-width=".9"/></svg>
<svg class="ic" style="left:1369.0px;top:7.0px;width:24px;height:24px" viewBox="0 0 24 24"><ellipse cx="11" cy="13.500" rx="9.500" ry="4.500" fill="none" stroke="#3c3c3c" stroke-width="2.400"/><ellipse cx="11" cy="13.500" rx="9.500" ry="4.500" fill="none" stroke="#f2f2f2" stroke-width="1"/><ellipse cx="11" cy="13.500" rx="6" ry="2.200" fill="none" stroke="#555" stroke-width=".8"/><circle cx="4.5" cy="19.5" r="3.1" fill="#ecd11a" stroke="#3c3500" stroke-width=".9"/><circle cx="18.5" cy="6.0" r="3.1" fill="#ecd11a" stroke="#3c3500" stroke-width=".9"/></svg>
<svg class="ic" style="left:1402.0px;top:7.0px;width:24px;height:24px" viewBox="0 0 24 24"><path d="M4.500 5.500h15v14h-15z" fill="none" stroke="#3c3c3c" stroke-width="2.6"/><path d="M4.500 5.500h15v14h-15z" fill="none" stroke="#f2f2f2" stroke-width="1.1"/><circle cx="4.5" cy="19.5" r="3.1" fill="#ecd11a" stroke="#3c3500" stroke-width=".9"/><circle cx="19.5" cy="5.5" r="3.1" fill="#ecd11a" stroke="#3c3500" stroke-width=".9"/></svg>
<svg class="ic" style="left:1435.0px;top:7.0px;width:24px;height:24px" viewBox="0 0 24 24"><path d="M12 3l9 6.500l-3.500 10.500h-11l-3.500-10.500z" fill="none" stroke="#3c3c3c" stroke-width="2.400"/><path d="M12 3l9 6.500l-3.500 10.500h-11l-3.500-10.500z" fill="none" stroke="#f2f2f2" stroke-width="1"/><path d="M12 7l5.500 4l-2 6.500h-7l-2-6.500z" fill="none" stroke="#555" stroke-width=".8"/><circle cx="12.0" cy="12.5" r="2.9" fill="#ecd11a" stroke="#3c3500" stroke-width=".9"/><circle cx="20.0" cy="10.0" r="2.9" fill="#ecd11a" stroke="#3c3500" stroke-width=".9"/></svg>
<svg class="ic" style="left:1468.0px;top:7.0px;width:24px;height:24px" viewBox="0 0 24 24"><path d="M4.500 19C5 9 8 4.500 12 4.500S19 9 19.500 19" fill="none" stroke="#3c3c3c" stroke-width="2.6"/><path d="M4.500 19C5 9 8 4.500 12 4.500S19 9 19.500 19" fill="none" stroke="#f2f2f2" stroke-width="1.1"/><circle cx="12.0" cy="4.5" r="3.1" fill="#ecd11a" stroke="#3c3500" stroke-width=".9"/><circle cx="4.5" cy="19.0" r="3.1" fill="#ecd11a" stroke="#3c3500" stroke-width=".9"/><circle cx="19.5" cy="19.0" r="3.1" fill="#ecd11a" stroke="#3c3500" stroke-width=".9"/></svg>
<svg class="ic" style="left:1501.0px;top:7.0px;width:24px;height:24px" viewBox="0 0 24 24"><path d="M4.500 4.500v15M19.500 4.500v15" stroke="#444" stroke-width="1"/><path d="M4.500 19.500C4.500 9 19.500 9 19.500 19.500" fill="none" stroke="#3c3c3c" stroke-width="2.4"/><path d="M4.500 19.500C4.500 9 19.500 9 19.500 19.500" fill="none" stroke="#f2f2f2" stroke-width="0.9"/><text x="9.200" y="20.500" font-size="8" font-weight="bold" fill="#555" font-family="DejaVu Sans,sans-serif">3</text><rect x="2.500" y="2.500" width="4" height="4" fill="#ecd11a" stroke="#3c3500" stroke-width=".8"/><rect x="17.500" y="2.500" width="4" height="4" fill="#ecd11a" stroke="#3c3500" stroke-width=".8"/><circle cx="4.5" cy="19.5" r="3.1" fill="#ecd11a" stroke="#3c3500" stroke-width=".9"/><circle cx="19.5" cy="19.5" r="3.1" fill="#ecd11a" stroke="#3c3500" stroke-width=".9"/></svg>
<div class="dd" style="left:1531.0px;top:17.5px"></div>
<svg class="ic" style="left:1546.0px;top:7.0px;width:24px;height:24px" viewBox="0 0 24 24"><circle cx="12.0" cy="12.0" r="3.0" fill="#ecd11a" stroke="#3c3500" stroke-width=".9"/></svg>
<svg class="ic" style="left:1579.0px;top:7.0px;width:24px;height:24px" viewBox="0 0 24 24"><path d="M2.500 9l10-7h9.500v6h-6v4h6v5.500l-10 5.500h-9.500z" fill="#d9bf0a" stroke="#5a4f00" stroke-width="1" stroke-linejoin="round"/><path d="M2.500 9h9.500v14M12 9l10-7" fill="none" stroke="#5a4f00" stroke-width="1"/><path d="M2.500 9h9.500v14h-9.500z" fill="#f0dc28" stroke="#5a4f00" stroke-width="1" stroke-linejoin="round"/></svg>
<div class="hd" style="left:1616.0px;top:11.0px"></div>
<svg class="ic" style="left:1627.0px;top:7.0px;width:24px;height:24px" viewBox="0 0 24 24"><text x="2.500" y="21.500" font-size="23.500" font-weight="bold" font-style="italic" fill="#e9cf14" stroke="#4a4100" stroke-width=".9" font-family="DejaVu Sans,Liberation Sans,sans-serif">A</text></svg>
<svg class="a" style="left:1668px;top:16px" width="9" height="8" viewBox="0 0 9 8"><path d="M1 .8l2.500 3.200l-2.500 3.200M5 .8l2.500 3.200l-2.500 3.200" fill="none" stroke="#444" stroke-width="1"/></svg></div>
<div class="tb a" style="top:136px;height:38px">
<div class="hd" style="left:5.0px;top:11.0px"></div>
<svg class="ic" style="left:18.0px;top:7.0px;width:24px;height:24px" viewBox="0 0 24 24"><path d="M12 1.500l4 4.500h-2.500v4.500h4.500v-2.500l4.500 4l-4.500 4v-2.500h-4.500v4.500h2.500l-4 4.500l-4-4.500h2.500v-4.500h-4.500v2.500l-4.500-4l4.500-4v2.500h4.500v-4.500h-2.500z" fill="#4a7fc4" stroke="#13294d" stroke-width="1" stroke-linejoin="round"/></svg>
<svg class="ic" style="left:50.0px;top:7.0px;width:24px;height:24px" viewBox="0 0 24 24"><path d="M12.500 5.500a7.500 7.500 0 1 1-8 7.500" fill="none" stroke="#13294d" stroke-width="4.800"/><path d="M12.500 5.500a7.500 7.500 0 1 1-8 7.500" fill="none" stroke="#4a7fc4" stroke-width="3"/><path d="M15.500 1v10.500l-8.500-4.500z" fill="#4a7fc4" stroke="#13294d" stroke-width="1" stroke-linejoin="round"/></svg>
<svg class="ic" style="left:84.0px;top:7.0px;width:24px;height:24px" viewBox="0 0 24 24"><rect x="2.500" y="2.500" width="19" height="19" fill="none" stroke="#2f62a8" stroke-width="2.200" stroke-dasharray="3 2"/><rect x="2.500" y="12.500" width="9" height="9" fill="#f2f6fb" stroke="#13294d" stroke-width="2.200"/><path d="M12 12l6-6M18 6h-4.500M18 6v4.500" fill="none" stroke="#2f62a8" stroke-width="2"/></svg>
<svg class="ic" style="left:117.0px;top:7.0px;width:24px;height:24px" viewBox="0 0 24 24"><path d="M12 1v22" stroke="#2f62a8" stroke-width="3" stroke-dasharray="2.500 1.500"/><path d="M9.500 4.500v15h-8.500z" fill="#4a7fc4" stroke="#13294d" stroke-width="1"/><path d="M14.500 4.500v15h8.500z" fill="#4a7fc4" stroke="#13294d" stroke-width="1"/></svg>
<svg class="ic" style="left:150.0px;top:7.0px;width:24px;height:24px" viewBox="0 0 24 24"><path d="M3.500 5l3-2.500h14.500v9c0 5-3 8.500-8 9.500" fill="none" stroke="#13294d" stroke-width="3.2" /><path d="M3.500 5l3-2.500h14.500v9c0 5-3 8.500-8 9.500" fill="none" stroke="#5b8fd0" stroke-width="1.4" /><path d="M6 9.500c3-2 8-1 8 2.500c0 2.500-2 4-5.500 4.500" fill="none" stroke="#13294d" stroke-width="2.200"/></svg>
<svg class="ic" style="left:183.0px;top:7.0px;width:24px;height:24px" viewBox="0 0 24 24"><path d="M12 2.500v19" stroke="#13294d" stroke-width="3.200" stroke-linecap="round"/><path d="M12 2.500v19" stroke="#5b8fd0" stroke-width="1.400" stroke-linecap="round"/><path d="M2 12l4.500-4v2.500h3v3h-3v2.500zM22 12l-4.500-4v2.500h-3v3h3v2.500z" fill="#4a7fc4" stroke="#13294d" stroke-width=".9"/></svg>
<svg class="ic" style="left:216.0px;top:7.0px;width:24px;height:24px" viewBox="0 0 24 24"><rect x="3" y="3" width="9" height="18" fill="#f2f6fb" stroke="#13294d" stroke-width="2.400"/><path d="M13 4l8 17h-8" fill="none" stroke="#2f62a8" stroke-width="2" stroke-dasharray="2.500 1.500"/><path d="M13.500 8l5.500 12.500h-5.500z" fill="#4a7fc4" opacity=".8"/></svg>
<div class="sep" style="left:247.5px;top:10.0px"></div>
<svg class="ic" style="left:255.0px;top:7.0px;width:24px;height:24px" viewBox="0 0 24 24"><path d="M12 1.500c2.500 0 4.500 1 5.500 2.500c2.500 0 5 2.500 5.500 6c.3 2-.5 3.500-1.500 3.500c-1 0-2-1-2.500-2.500c0 4-2 8-4.500 10c-1.500 1.200-3.500 1.200-5 0c-2.500-2-4.500-6-4.500-10c-.5 1.500-1.500 2.500-2.500 2.500c-1 0-1.800-1.500-1.500-3.500c.5-3.500 3-6 5.500-6c1-1.500 3-2.500 5.500-2.500z" fill="#4a7fc4" stroke="#13294d" stroke-width="1" stroke-linejoin="round"/><ellipse cx="12.500" cy="11.500" rx="4" ry="2.400" fill="#fff"/><circle cx="11" cy="11.700" r="1.300" fill="#111"/><circle cx="14" cy="11.700" r="1.300" fill="#111"/><path d="M10 19.500c1.300 1 2.700 1 4 0M12 18v1.800" fill="none" stroke="#13294d" stroke-width="1"/></svg>
<svg class="ic" style="left:288.0px;top:7.0px;width:24px;height:24px" viewBox="0 0 24 24"><rect x="2.0" y="1.5" width="5.800" height="9.500" rx=".6" fill="#4a7fc4" stroke="#13294d" stroke-width=".9"/><rect x="9.3" y="1.5" width="5.800" height="9.500" rx=".6" fill="#4a7fc4" stroke="#13294d" stroke-width=".9"/><rect x="16.6" y="1.5" width="5.800" height="9.500" rx=".6" fill="#4a7fc4" stroke="#13294d" stroke-width=".9"/><rect x="2.0" y="12.8" width="5.800" height="9.500" rx=".6" fill="#4a7fc4" stroke="#13294d" stroke-width=".9"/><rect x="9.3" y="12.8" width="5.800" height="9.500" rx=".6" fill="#4a7fc4" stroke="#13294d" stroke-width=".9"/><rect x="16.6" y="12.8" width="5.800" height="9.500" rx=".6" fill="#4a7fc4" stroke="#13294d" stroke-width=".9"/></svg>
<div class="dd" style="left:318.0px;top:17.5px"></div>
<div class="sep" style="left:332.5px;top:10.0px"></div>
<svg class="ic" style="left:340.0px;top:7.0px;width:24px;height:24px" viewBox="0 0 24 24"><path d="M6 12l10-10.500l-1.500 9l6 8l-12 4z" fill="#4a7fc4" stroke="#13294d" stroke-width="1" stroke-linejoin="round"/><path d="M4 6l8 8" stroke="#13294d" stroke-width="5"/><path d="M4 6l8 8" stroke="#3f72b4" stroke-width="3"/><path d="M3.500 8.500l6-6" stroke="#13294d" stroke-width=".8"/><path d="M10.500 15.500l4.500 4l-1.500-6.500z" fill="#f4f4f4" stroke="#13294d" stroke-width=".8"/></svg>
<svg class="ic" style="left:374.0px;top:7.0px;width:24px;height:24px" viewBox="0 0 24 24"><path d="M14.500 3.500v12M14.500 15.500l5.500 3.500M14.500 15.500l-9 5" fill="none" stroke="#333" stroke-width="1.200"/><rect x="13" y="2" width="3" height="3" fill="#5b8fd0" stroke="#13294d" stroke-width=".8"/><rect x="13" y="14" width="3" height="3" fill="#5b8fd0" stroke="#13294d" stroke-width=".8"/><rect x="18.500" y="17.500" width="3" height="3" fill="#5b8fd0" stroke="#13294d" stroke-width=".8"/><rect x="4" y="19" width="3" height="3" fill="#5b8fd0" stroke="#13294d" stroke-width=".8"/><path d="M2.500 6.500l7.500 7.500" stroke="#13294d" stroke-width="4.500"/><path d="M2.500 6.500l7.500 7.500" stroke="#3f72b4" stroke-width="2.600"/><path d="M9 12.500l3.500 4.500l-1-5.500z" fill="#f4f4f4" stroke="#13294d" stroke-width=".8"/></svg>
<div class="sep" style="left:405.5px;top:10.0px"></div>
<svg class="ic" style="left:413.0px;top:7.0px;width:24px;height:24px" viewBox="0 0 24 24"><path d="M1.500 12h21" stroke="#8a8a8a" stroke-width="3"/><path d="M1.500 12h21" stroke="#d4d4d4" stroke-width="1.400"/><path d="M11.700 12l-5.200-4.500v2.500h-2v4h2v2.500zM12.300 12l5.200-4.500v2.500h2v4h-2v2.500z" fill="#4a7fc4" stroke="#13294d" stroke-width=".9" stroke-linejoin="round"/></svg>
<svg class="ic" style="left:447.0px;top:7.0px;width:24px;height:24px" viewBox="0 0 24 24"><path d="M1.500 12h21" stroke="#8a8a8a" stroke-width="2.800"/><path d="M1.500 12h21" stroke="#d4d4d4" stroke-width="1.200"/><path d="M9.500 2.500v19M14.500 2.500v19" fill="none" stroke="#13294d" stroke-width="3.0" stroke-linecap="round"/><path d="M9.500 2.500v19M14.500 2.500v19" fill="none" stroke="#5b8fd0" stroke-width="1.2" stroke-linecap="round"/></svg>
<svg class="ic" style="left:480.0px;top:7.0px;width:24px;height:24px" viewBox="0 0 24 24"><path d="M12 1.500l9.500 10.500h-5.500v10h-8v-10h-5.500z" fill="#4a7fc4" stroke="#13294d" stroke-width="1.100" stroke-linejoin="round"/><path d="M12 4l6.500 7h-4v9.500" fill="none" stroke="#6d9ad4" stroke-width="1"/></svg>
<svg class="ic" style="left:513.0px;top:7.0px;width:24px;height:24px" viewBox="0 0 24 24"><g transform="translate(0 24) scale(1 -1)"><path d="M12 1.500l9.500 10.500h-5.500v10h-8v-10h-5.500z" fill="#4a7fc4" stroke="#13294d" stroke-width="1.100" stroke-linejoin="round"/><path d="M12 4l6.500 7h-4v9.500" fill="none" stroke="#6d9ad4" stroke-width="1"/></g></svg>
<div class="sep" style="left:544.5px;top:10.0px"></div>
<svg class="ic" style="left:552.0px;top:7.0px;width:24px;height:24px" viewBox="0 0 24 24"><path d="M2.500 7l4.500-3l4.500 3l4.500-3l5 3M2.500 20.500c3-3.500 6-3.500 9.500 0s6.500 0 9.500-3" fill="none" stroke="#666" stroke-width="2.600"/><path d="M2.500 7l4.500-3l4.500 3l4.500-3l5 3M2.500 20.500c3-3.500 6-3.500 9.500 0s6.500 0 9.500-3" fill="none" stroke="#f4f4f4" stroke-width="1.200"/><path d="M6.500 10h11l-5.500 5z" fill="#5b8fd0" stroke="#13294d" stroke-width=".9"/></svg>
<svg class="ic" style="left:586.0px;top:7.0px;width:24px;height:24px" viewBox="0 0 24 24"><ellipse cx="9" cy="6.500" rx="6.500" ry="3.500" fill="none" stroke="#3f72b4" stroke-width="2.200"/><ellipse cx="15" cy="6" rx="5.500" ry="3" fill="none" stroke="#3f72b4" stroke-width="2"/><path d="M3.500 17l5.500-2.500l5 2.500l-5.500 3.500z" fill="none" stroke="#d01010" stroke-width="2.200"/><ellipse cx="16" cy="18" rx="5.500" ry="3" fill="none" stroke="#d01010" stroke-width="2.200"/><path d="M8.500 8l3.500 3.500h-2v4.500h-3v-4.500h-2zM16.500 16.500l-3.500-3.500h2v-4.500h3v4.500h2z" fill="#4a7fc4" stroke="#13294d" stroke-width=".8"/></svg>
<div class="sep" style="left:617.5px;top:10.0px"></div>
<svg class="ic" style="left:625.0px;top:7.0px;width:24px;height:24px" viewBox="0 0 24 24"><path d="M2 8l10-5l10 4v8l-10 5l-10-4z" fill="#3f72b4" stroke="#13294d" stroke-width="1" stroke-linejoin="round"/><path d="M2 8l10-5l10 4l-10 5z" fill="#6d9ad4" stroke="#13294d" stroke-width="1" stroke-linejoin="round"/><path d="M12 12v8" stroke="#13294d" stroke-width="1"/><path d="M3 19l9-3l9 3l-9 3.500z" fill="none" stroke="#555" stroke-width="1"/></svg>
<svg class="ic" style="left:659.0px;top:7.0px;width:24px;height:24px" viewBox="0 0 24 24"><rect x="9.500" y="8.500" width="13" height="13" rx="1" fill="#d9d9d9" stroke="#9a9a9a"/><path d="M12 19l8-8M14 15.500a3 3 0 1 0 6 0a3 3 0 1 0-6 0" fill="none" stroke="#5b8fd0" stroke-width="1.200"/><path d="M1.500 6.500h7v-3.500l7 6l-7 6v-3.500h-7z" fill="#3f72b4" stroke="#13294d" stroke-width="1" stroke-linejoin="round"/></svg></div>
<span class="t" style="left:5px;top:178px">Combo View</span>
<svg class="a" style="left:343.0px;top:179.0px" width="11" height="11" viewBox="0 0 11 11"><rect x=".5" y=".5" width="10" height="10" rx="2.200" fill="#f1f1f1" stroke="#767676"/><rect x="4.500" y="2.500" width="4" height="4" rx=".8" fill="none" stroke="#6a6a6a" stroke-width=".9"/><rect x="2.500" y="4.500" width="4" height="4" rx=".8" fill="#f1f1f1" stroke="#6a6a6a" stroke-width=".9"/></svg>
<svg class="a" style="left:357.0px;top:179.0px" width="11" height="11" viewBox="0 0 11 11"><rect x=".5" y=".5" width="10" height="10" rx="2.200" fill="#f1f1f1" stroke="#767676"/><path d="M3 3l5 5M8 3l-5 5" stroke="#5a5a5a" stroke-width="1.900"/></svg>
<div class="a" style="left:2px;top:219px;width:368px;height:628px;border:1px solid #bfbfbf;background:#fcfcfc"></div>
<div class="a" style="left:61px;top:196px;width:59px;height:24px;border:1px solid #bfbfbf;border-bottom:none;border-radius:3px 3px 0 0;background:linear-gradient(#e9e9e9,#dfdfdf)"></div>
<span class="t" style="left:73px;top:202px">Tasks</span>
<div class="a" style="left:2px;top:194px;width:60px;height:27px;border:1px solid #bfbfbf;border-bottom:none;border-radius:3px 3px 0 0;background:linear-gradient(#fbfbfb,#efefef)"></div>
<span class="t" style="left:13px;top:201px">Model</span>
<div class="frame" style="left:3px;top:221px;width:365px;height:311px"></div>
<div class="a" style="left:4px;top:222px;width:349px;height:19px;background:linear-gradient(#fdfdfd,#ececec);border-bottom:1px solid #c2c2c2"></div>
<div class="a" style="left:314px;top:222px;width:1px;height:18px;background:#c8c8c8"></div>
<span class="t" style="left:6px;top:225px">Labels &amp; Attributes</span>
<div class="a" style="left:317px;top:225px;width:36px;height:15px;overflow:hidden">
<span class="t" style="left:0;top:0">Description</span></div>
<div class="a" style="left:4px;top:241px;width:349px;height:276px;overflow:hidden;background:#fff">
<div class="a" style="left:0;top:72px;width:349px;height:144px;background:#308cc6"></div>
<svg class="a" style="left:122px;top:1px;opacity:1" width="16" height="16" viewBox="0 0 16 16"><path d="M1.500 2.500h8l3 3v1.500h-3l-2.500 1h-5.500z" fill="#c9c5ad" stroke="#55524a" stroke-width=".9"/><path d="M3 4.500h5M3 6.500h4" stroke="#77746a" stroke-width=".8"/><path d="M9.500 7.500c2.500 0 3.500 2 3.500 4.500" fill="none" stroke="#444" stroke-width="1.300"/><circle cx="13" cy="13" r="1.800" fill="#ecd11a" stroke="#5a4f00" stroke-width=".7"/></svg>
<span class="t" style="left:145px;top:3px;">dLabl__W15</span>
<svg class="a" style="left:122px;top:19px;opacity:1" width="16" height="16" viewBox="0 0 16 16"><path d="M1 8l5-5v10zM15 8l-5-5v10z" fill="#f0c818" stroke="#8a7400" stroke-width=".8"/><path d="M5 8h6" stroke="#555" stroke-width="1.400"/><path d="M6 5v6M10 5v6" stroke="#f0c818" stroke-width="1"/></svg>
<span class="t" style="left:145px;top:21px;">Dimension020</span>
<svg class="a" style="left:122px;top:37px;opacity:1" width="16" height="16" viewBox="0 0 16 16"><path d="M1.500 2.500h8l3 3v1.500h-3l-2.500 1h-5.500z" fill="#c9c5ad" stroke="#55524a" stroke-width=".9"/><path d="M3 4.500h5M3 6.500h4" stroke="#77746a" stroke-width=".8"/><path d="M9.500 7.500c2.500 0 3.500 2 3.500 4.500" fill="none" stroke="#444" stroke-width="1.300"/><circle cx="13" cy="13" r="1.800" fill="#ecd11a" stroke="#5a4f00" stroke-width=".7"/></svg>
<span class="t" style="left:145px;top:39px;">dLabel__D09</span>
<svg class="a" style="left:122px;top:55px;opacity:1" width="16" height="16" viewBox="0 0 16 16"><path d="M11 2c2.500 2 3 5-1 6.500s-8 1.500-7 4.500s4 2.500 6.500 1" fill="none" stroke="#3a5a8c" stroke-width="1.500" stroke-linecap="round"/></svg>
<span class="t" style="left:145px;top:57px;">Circle</span>
<svg class="a" style="left:122px;top:73px;opacity:.62" width="16" height="16" viewBox="0 0 16 16"><path d="M1.500 2.500h8l3 3v1.500h-3l-2.500 1h-5.500z" fill="#c9c5ad" stroke="#55524a" stroke-width=".9"/><path d="M3 4.500h5M3 6.500h4" stroke="#77746a" stroke-width=".8"/><path d="M9.500 7.500c2.500 0 3.500 2 3.500 4.500" fill="none" stroke="#444" stroke-width="1.300"/><circle cx="13" cy="13" r="1.800" fill="#ecd11a" stroke="#5a4f00" stroke-width=".7"/></svg>
<span class="t" style="left:145px;top:75px;color:#fff">dLabel003</span>
<svg class="a" style="left:122px;top:91px;opacity:.62" width="16" height="16" viewBox="0 0 16 16"><path d="M1.500 2.500h8l3 3v1.500h-3l-2.500 1h-5.500z" fill="#c9c5ad" stroke="#55524a" stroke-width=".9"/><path d="M3 4.500h5M3 6.500h4" stroke="#77746a" stroke-width=".8"/><path d="M9.500 7.500c2.500 0 3.500 2 3.500 4.500" fill="none" stroke="#444" stroke-width="1.300"/><circle cx="13" cy="13" r="1.800" fill="#ecd11a" stroke="#5a4f00" stroke-width=".7"/></svg>
<span class="t" style="left:145px;top:93px;color:#fff">dLabel004</span>
<svg class="a" style="left:122px;top:109px;opacity:.62" width="16" height="16" viewBox="0 0 16 16"><path d="M1.500 2.500h8l3 3v1.500h-3l-2.500 1h-5.500z" fill="#c9c5ad" stroke="#55524a" stroke-width=".9"/><path d="M3 4.500h5M3 6.500h4" stroke="#77746a" stroke-width=".8"/><path d="M9.500 7.500c2.500 0 3.500 2 3.500 4.500" fill="none" stroke="#444" stroke-width="1.300"/><circle cx="13" cy="13" r="1.800" fill="#ecd11a" stroke="#5a4f00" stroke-width=".7"/></svg>
<span class="t" style="left:145px;top:111px;color:#fff">dLabel005</span>
<svg class="a" style="left:122px;top:127px;opacity:.62" width="16" height="16" viewBox="0 0 16 16"><path d="M1.500 2.500h8l3 3v1.500h-3l-2.500 1h-5.500z" fill="#c9c5ad" stroke="#55524a" stroke-width=".9"/><path d="M3 4.500h5M3 6.500h4" stroke="#77746a" stroke-width=".8"/><path d="M9.500 7.500c2.500 0 3.500 2 3.500 4.500" fill="none" stroke="#444" stroke-width="1.300"/><circle cx="13" cy="13" r="1.800" fill="#ecd11a" stroke="#5a4f00" stroke-width=".7"/></svg>
<span class="t" style="left:145px;top:129px;color:#fff">dLabel006</span>
<svg class="a" style="left:122px;top:145px;opacity:.62" width="16" height="16" viewBox="0 0 16 16"><path d="M1.500 2.500h8l3 3v1.500h-3l-2.500 1h-5.500z" fill="#c9c5ad" stroke="#55524a" stroke-width=".9"/><path d="M3 4.500h5M3 6.500h4" stroke="#77746a" stroke-width=".8"/><path d="M9.500 7.500c2.500 0 3.500 2 3.500 4.500" fill="none" stroke="#444" stroke-width="1.300"/><circle cx="13" cy="13" r="1.800" fill="#ecd11a" stroke="#5a4f00" stroke-width=".7"/></svg>
<span class="t" style="left:145px;top:147px;color:#fff">dLabel007</span>
<svg class="a" style="left:122px;top:163px;opacity:.62" width="16" height="16" viewBox="0 0 16 16"><path d="M1.500 2.500h8l3 3v1.500h-3l-2.500 1h-5.500z" fill="#c9c5ad" stroke="#55524a" stroke-width=".9"/><path d="M3 4.500h5M3 6.500h4" stroke="#77746a" stroke-width=".8"/><path d="M9.500 7.500c2.500 0 3.500 2 3.500 4.500" fill="none" stroke="#444" stroke-width="1.300"/><circle cx="13" cy="13" r="1.800" fill="#ecd11a" stroke="#5a4f00" stroke-width=".7"/></svg>
<span class="t" style="left:145px;top:165px;color:#fff">dLabel008</span>
<svg class="a" style="left:122px;top:181px;opacity:.62" width="16" height="16" viewBox="0 0 16 16"><path d="M1.500 2.500h8l3 3v1.500h-3l-2.500 1h-5.500z" fill="#c9c5ad" stroke="#55524a" stroke-width=".9"/><path d="M3 4.500h5M3 6.500h4" stroke="#77746a" stroke-width=".8"/><path d="M9.500 7.500c2.500 0 3.500 2 3.500 4.500" fill="none" stroke="#444" stroke-width="1.300"/><circle cx="13" cy="13" r="1.800" fill="#ecd11a" stroke="#5a4f00" stroke-width=".7"/></svg>
<span class="t" style="left:145px;top:183px;color:#fff">dLabel009</span>
<svg class="a" style="left:122px;top:199px;opacity:.62" width="16" height="16" viewBox="0 0 16 16"><path d="M1.500 2.500h8l3 3v1.500h-3l-2.500 1h-5.500z" fill="#c9c5ad" stroke="#55524a" stroke-width=".9"/><path d="M3 4.500h5M3 6.500h4" stroke="#77746a" stroke-width=".8"/><path d="M9.500 7.500c2.500 0 3.500 2 3.500 4.500" fill="none" stroke="#444" stroke-width="1.300"/><circle cx="13" cy="13" r="1.800" fill="#ecd11a" stroke="#5a4f00" stroke-width=".7"/></svg>
<span class="t" style="left:145px;top:201px;color:#fff">dLabel010</span>
<div class="a" style="left:87.500px;top:221px;width:0;height:0;border-top:4px solid transparent;border-bottom:4px solid transparent;border-left:4px solid #555"></div>
<svg class="a" style="left:102px;top:217px" width="16" height="16" viewBox="0 0 16 16"><path d="M1.500 15.500v-13.500h5l1.500 2h7v11.500z" fill="#d9c8b8" stroke="#a08f80" stroke-width="1"/><path d="M2 5.500h12.500v9.500h-12.500z" fill="#e6d7c6"/></svg>
<span class="t" style="left:125px;top:219px">Grp__WPProxy</span>
<div class="a" style="left:87.500px;top:239px;width:0;height:0;border-top:4px solid transparent;border-bottom:4px solid transparent;border-left:4px solid #555"></div>
<svg class="a" style="left:102px;top:235px" width="16" height="16" viewBox="0 0 16 16"><path d="M1.500 10l4-1.500h9v4l-4 3h-9z" fill="#3f72b4" stroke="#1d3f73" stroke-width=".9"/><path d="M1.500 10h9v5.500M10.500 10l4-1.500" fill="none" stroke="#1d3f73" stroke-width=".8"/><path d="M8 .8l4.500 4.700h-2.500v3.500h-4v-3.500h-2.500z" fill="#5b8fd0" stroke="#1d3f73" stroke-width=".9"/></svg>
<span class="t" style="left:125px;top:237px">PlantExtru__1F_0.3mH_Plant</span>
<div class="a" style="left:87.500px;top:257px;width:0;height:0;border-top:4px solid transparent;border-bottom:4px solid transparent;border-left:4px solid #555"></div>
<svg class="a" style="left:102px;top:253px" width="16" height="16" viewBox="0 0 16 16"><path d="M8 3l6-2l1.500 2l-6 2zM5.500 7l6-2l1.500 2l-6 2zM3 11l6-2l1.500 2l-6 2z" fill="#e6e6e6" stroke="#888" stroke-width=".9"/><rect x=".5" y="11" width="5" height="4.500" fill="#fff" stroke="#111" stroke-width=".9"/><path d="M2 14.500l3-3M3 11.500h2v2" fill="none" stroke="#111" stroke-width=".9"/></svg>
<span class="t" style="left:125px;top:255px">Stairs__1F</span>
<div class="a" style="left:87.500px;top:275px;width:0;height:0;border-top:4px solid transparent;border-bottom:4px solid transparent;border-left:4px solid #555"></div>
<svg class="a" style="left:102px;top:271px" width="16" height="16" viewBox="0 0 16 16"><path d="M1 6l10-4.500l4 1.500v6l-10 4.500l-4-1.500z" fill="#d9d9d9" stroke="#888" stroke-width=".9"/></svg>
<span class="t" style="left:125px;top:273px">Stairs__1F_Col</span></div>
<div class="a" style="left:353px;top:222px;width:14px;height:295px;background:#e0e0e0;border-left:1px solid #bdbdbd;border-right:1px solid #c4c4c4"></div>
<div class="a" style="left:353px;top:222px;width:14px;height:14px;background:linear-gradient(90deg,#fdfdfd,#f1f1f1);border:1px solid #bdbdbd;border-top:none"></div>
<div class="a" style="left:353px;top:503px;width:14px;height:14px;background:linear-gradient(90deg,#fdfdfd,#f1f1f1);border:1px solid #bdbdbd;border-bottom:none"></div>
<div class="a" style="left:353px;top:330px;width:14px;height:52px;background:linear-gradient(90deg,#ffffff,#eeeeee);border:1px solid #bdbdbd"></div>
<div class="a" style="left:356.0px;top:227.0px;width:0;height:0;border-left:4px solid transparent;border-right:4px solid transparent;border-bottom:4px solid #555"></div>
<div class="a" style="left:356.0px;top:508.0px;width:0;height:0;border-left:4px solid transparent;border-right:4px solid transparent;border-top:4px solid #555"></div>
<div class="a" style="left:4px;top:517px;width:349px;height:14px;background:#dcdcdc;border-top:1px solid #c6c6c6"></div>
<div class="a" style="left:4px;top:517px;width:15px;height:14px;background:#f1f1f1;border:1px solid #c0c0c0"></div>
<div class="a" style="left:339px;top:517px;width:15px;height:14px;background:#f1f1f1;border:1px solid #c0c0c0"></div>
<div class="a" style="left:18px;top:517px;width:273px;height:14px;background:#f3f3f3;border:1px solid #c0c0c0"></div>
<div class="a" style="left:8.5px;top:520.0px;width:0;height:0;border-top:4px solid transparent;border-bottom:4px solid transparent;border-right:4px solid #555"></div>
<div class="a" style="left:344.5px;top:520.0px;width:0;height:0;border-top:4px solid transparent;border-bottom:4px solid transparent;border-left:4px solid #555"></div>
<div class="a" style="left:353px;top:517px;width:14px;height:14px;background:#efefef"></div>
<div class="a" style="left:179px;top:532.500px;width:16px;height:1px;background-image:linear-gradient(90deg,#b4b4b4 1px,transparent 1px);background-size:2px 1px"></div>
<div class="frame" style="left:3px;top:536px;width:365px;height:285px;background:#fcfcfc"></div>
<div class="frame" style="left:5px;top:538px;width:361px;height:281px;background:#fff"></div>
<div class="a" style="left:6px;top:539px;width:345px;height:19px;background:linear-gradient(#fdfdfd,#ececec);border-bottom:1px solid #c2c2c2"></div>
<div class="a" style="left:145px;top:539px;width:1px;height:18px;background:#c8c8c8"></div>
<span class="t" style="left:8px;top:542px">Property</span>
<span class="t" style="left:148px;top:542px">Value</span>
<div class="a" style="left:6px;top:559.5px;width:345px;height:20.5px;background:#f7f7f7"></div>
<div class="a" style="left:26px;top:579.0px;width:325px;height:1px;background:#c9c9c9"></div>
<span class="t" style="left:29px;top:563.8px">Line</span>
<span class="t" style="left:149px;top:563.8px">false</span>
<div class="a" style="left:6px;top:580.0px;width:345px;height:29.0px;background:#ffffff"></div>
<div class="a" style="left:26px;top:608.0px;width:325px;height:1px;background:#c9c9c9"></div>
<span class="t" style="left:29px;top:587.5px">Line Color</span>
<div class="a" style="left:149px;top:582.0px;width:24px;height:24px;background:#000"></div>
<span class="t" style="left:179px;top:587.5px">[0, 0, 0]</span>
<div class="a" style="left:6px;top:609.0px;width:345px;height:20.0px;background:#f7f7f7"></div>
<div class="a" style="left:26px;top:628.0px;width:325px;height:1px;background:#c9c9c9"></div>
<span class="t" style="left:29px;top:613.0px">Line Width</span>
<span class="t" style="left:149px;top:613.0px">1.00</span>
<div class="a" style="left:6px;top:629.0px;width:345px;height:20.0px;background:#ffffff"></div>
<div class="a" style="left:26px;top:648.0px;width:325px;height:1px;background:#c9c9c9"></div>
<span class="t" style="left:29px;top:633.0px">Max Chars</span>
<span class="t" style="left:149px;top:633.0px">0</span>
<div class="a" style="left:6px;top:649.0px;width:345px;height:20.0px;background:#f7f7f7"></div>
<div class="a" style="left:26px;top:668.0px;width:325px;height:1px;background:#c9c9c9"></div>
<span class="t" style="left:29px;top:653.0px">On Top When Se...</span>
<span class="t" style="left:149px;top:653.0px">Disabled</span>
<div class="a" style="left:6px;top:669.0px;width:345px;height:20.0px;background:#ffffff"></div>
<div class="a" style="left:26px;top:688.0px;width:325px;height:1px;background:#c9c9c9"></div>
<span class="t" style="left:29px;top:673.0px">Selection Style</span>
<span class="t" style="left:149px;top:673.0px">Shape</span>
<div class="a" style="left:6px;top:689.0px;width:345px;height:20.0px;background:#f7f7f7"></div>
<div class="a" style="left:26px;top:708.0px;width:325px;height:1px;background:#c9c9c9"></div>
<span class="t" style="left:29px;top:693.0px">Show In Tree</span>
<span class="t" style="left:149px;top:693.0px">true</span>
<div class="a" style="left:6px;top:709.0px;width:345px;height:20.0px;background:#ffffff"></div>
<div class="a" style="left:26px;top:728.0px;width:325px;height:1px;background:#c9c9c9"></div>
<span class="t" style="left:29px;top:713.0px">Text Alignment</span>
<span class="t" style="left:149px;top:713.0px">Middle</span>
<div class="a" style="left:6px;top:729.0px;width:345px;height:29.0px;background:#f7f7f7"></div>
<div class="a" style="left:26px;top:757.0px;width:325px;height:1px;background:#c9c9c9"></div>
<span class="t" style="left:29px;top:736.5px">Text Color</span>
<div class="a" style="left:149px;top:731.0px;width:24px;height:24px;background:#000"></div>
<span class="t" style="left:179px;top:736.5px">[0, 0, 0]</span>
<div class="a" style="left:6px;top:758.0px;width:345px;height:20.0px;background:#ffffff"></div>
<div class="a" style="left:6px;top:757.0px;width:139px;height:20.0px;background:#308cc6"></div>
<span class="t" style="left:29px;top:762.0px;color:#fff">Text Font</span>
<div class="a" style="left:147px;top:757.5px;width:204px;height:19px;border:1px solid #b4b4b4;border-radius:2px;background:linear-gradient(#ffffff,#f0f0f0)"></div>
<span class="t" style="left:151px;top:762.0px">Source Code Pro Black</span>
<div class="a" style="left:337.5px;top:765.5px;width:0;height:0;border-left:4px solid transparent;border-right:4px solid transparent;border-top:4px solid #444"></div>
<div class="a" style="left:6px;top:778.0px;width:345px;height:20.0px;background:#f7f7f7"></div>
<div class="a" style="left:26px;top:797.0px;width:325px;height:1px;background:#c9c9c9"></div>
<span class="t" style="left:29px;top:782.0px">Text Size</span>
<span class="t" style="left:149px;top:782.0px">200.00 mm</span>
<div class="a" style="left:6px;top:798.0px;width:345px;height:20.0px;background:#ffffff"></div>
<div class="a" style="left:26px;top:817.0px;width:325px;height:1px;background:#c9c9c9"></div>
<span class="t" style="left:29px;top:802.0px">Visibility</span>
<span class="t" style="left:149px;top:802.0px">true</span>
<div class="a" style="left:145px;top:558px;width:1px;height:260px;background:#c9c9c9"></div>
<div class="a" style="left:26px;top:558.500px;width:325px;height:1px;background:#c9c9c9"></div>
<div class="a" style="left:351px;top:539px;width:15px;height:279px;background:#e0e0e0;border-left:1px solid #bdbdbd;border-right:1px solid #c4c4c4"></div>
<div class="a" style="left:351px;top:539px;width:15px;height:14px;background:linear-gradient(90deg,#fdfdfd,#f1f1f1);border:1px solid #bdbdbd;border-top:none"></div>
<div class="a" style="left:351px;top:804px;width:15px;height:14px;background:linear-gradient(90deg,#fdfdfd,#f1f1f1);border:1px solid #bdbdbd;border-bottom:none"></div>
<div class="a" style="left:351px;top:621px;width:15px;height:183px;background:linear-gradient(90deg,#ffffff,#eeeeee);border:1px solid #bdbdbd"></div>
<div class="a" style="left:354.5px;top:544.0px;width:0;height:0;border-left:4px solid transparent;border-right:4px solid transparent;border-bottom:4px solid #555"></div>
<div class="a" style="left:354.5px;top:809.0px;width:0;height:0;border-left:4px solid transparent;border-right:4px solid transparent;border-top:4px solid #555"></div>
<div class="a" style="left:56px;top:820px;width:53px;height:23px;border:1px solid #bfbfbf;border-top:none;border-radius:0 0 3px 3px;background:linear-gradient(#e4e4e4,#dcdcdc)"></div>
<span class="t" style="left:68px;top:825px">Data</span>
<div class="a" style="left:3px;top:820px;width:54px;height:25px;border:1px solid #bfbfbf;border-top:none;border-radius:0 0 3px 3px;background:#fcfcfc"></div>
<span class="t" style="left:15px;top:826px">View</span>
<div class="a" style="left:373px;top:505px;width:1px;height:16px;background-image:linear-gradient(#b4b4b4 1px,transparent 1px);background-size:1px 2px"></div>
<svg class="a" style="left:376px;top:175px" width="1305" height="642" viewBox="0 0 1305 642"><rect x="0" y="0" width="1305" height="642" fill="#dff5ff"/><rect x="0" y="0" width="259.500" height="642" fill="#bca8a8"/><rect x="260" y="0" width="33" height="642" fill="#fff"/><path d="M260 0v642" stroke="#5e5858" stroke-width="1.500"/><path d="M293 0v642" stroke="#6c7275" stroke-width="1.600"/><path d="M69.500 0v642" stroke="#2c2c2c" stroke-width="1"/><path d="M44 304.500h108M44 320.500h108" stroke="#2c2c2c" stroke-width="1"/><circle cx="69.500" cy="304.500" r="8.200" fill="#262626"/><circle cx="69.500" cy="320.500" r="8.200" fill="#262626"/><text transform="translate(60.400 147) rotate(-90) scale(0.942 1)" font-family="DejaVu Sans,Liberation Sans,sans-serif" font-size="34.500" fill="#2c2c2c">2850 mm</text><rect x="294" y="304.500" width="1020" height="16" fill="#fff"/><path d="M474 304.500H1320M293.500 320.500H724M740 320.500H840.500M857 320.500H1074.200M1090.500 320.500H1320" stroke="#2a2a2a" stroke-width="1.200"/><rect x="294" y="288" width="179.500" height="16.500" fill="#fff"/><path d="M293.500 288H473.500V304.500H293.500" fill="none" stroke="#2a2a2a" stroke-width="1"/><rect x="309.5" y="139.5" width="16.5" height="148.5" fill="#fff" stroke="#2a2a2a" stroke-width="1"/><path d="M702 316A147 147 0 0 1 833 463" fill="none" stroke="#2a2a2a" stroke-width="1" transform="translate(-376 -175)"/><path d="M1100 495.500V640H1233V495.500M1216.500 495.500V623.500H1116V495.500" fill="none" stroke="#2a2a2a" stroke-width="1" transform="translate(-376 -175)"/><path d="M1100.500 495V639.500H1232.500V495H1216V623H1116.500V495z" fill="#fff" transform="translate(-376 -175)"/><path d="M1100 495.500V640H1233V495.500M1216.500 495.500V623.500H1116V495.500" fill="none" stroke="#2a2a2a" stroke-width="1" transform="translate(-376 -175)"/><rect x="873" y="296" width="171" height="8" fill="#fff"/><path d="M1044 296H873V304" fill="none" stroke="#2a2a2a" stroke-width="1"/><rect x="873.0" y="320.5" width="181.5" height="8.5" fill="#fff" stroke="#2a2a2a" stroke-width="1"/><rect x="889.5" y="329.0" width="17.0" height="147.5" fill="#fff" stroke="#2a2a2a" stroke-width="1"/><path d="M1414 504A148 148 0 0 1 1282.500 650" fill="none" stroke="#2a2a2a" stroke-width="1" transform="translate(-376 -175)"/><circle cx="1057.5" cy="304.0" r="15.500" fill="none" stroke="#2a2a2a" stroke-width="1"/><rect x="1074.5" y="320.0" width="16" height="322" fill="#fff"/><path d="M1450.200 495.500V817M1466.500 495.500V817" fill="none" stroke="#2a2a2a" stroke-width="1" transform="translate(-376 -175)"/><rect x="1065.5" y="402.5" width="9.0" height="181.0" fill="#fff" stroke="#2a2a2a" stroke-width="1"/><rect x="1090.5" y="402.5" width="8.0" height="181.0" fill="#fff" stroke="#2a2a2a" stroke-width="1"/><rect x="1098.5" y="419.5" width="148.0" height="16.0" fill="#fff" stroke="#2a2a2a" stroke-width="1"/><path d="M1621.500 610.500A148 148 0 0 1 1474.500 742" fill="none" stroke="#2a2a2a" stroke-width="1" transform="translate(-376 -175)"/><rect x="724.0" y="593.5" width="97.0" height="17.0" fill="#fff" stroke="#2a2a2a" stroke-width="1"/><rect x="764.5" y="610.0" width="16" height="33" fill="#fff"/><path d="M1140.500 785.500V817M1156.500 785.500V817" fill="none" stroke="#2a2a2a" stroke-width="1" transform="translate(-376 -175)"/><rect x="978.5" y="593.5" width="96.0" height="17.0" fill="#fff" stroke="#2a2a2a" stroke-width="1"/><rect x="1074.0" y="594.0" width="2" height="16" fill="#fff"/><text x="374.5" y="238.0" font-family="Liberation Mono,DejaVu Sans Mono,monospace" font-weight="bold" font-size="33" fill="#23b623" stroke="#23b623" stroke-width="1.300" stroke-linejoin="round">D12</text><text x="952.5" y="403.0" font-family="Liberation Mono,DejaVu Sans Mono,monospace" font-weight="bold" font-size="33" fill="#23b623" stroke="#23b623" stroke-width="1.300" stroke-linejoin="round">D2</text><text x="1148.5" y="478.5" font-family="Liberation Mono,DejaVu Sans Mono,monospace" font-weight="bold" font-size="33" fill="#23b623" stroke="#23b623" stroke-width="1.300" stroke-linejoin="round">D4</text><g transform="translate(1232.0 71.0)" opacity="1"><rect x="-33" y="-30.500" width="66" height="65" rx="9" fill="#e0eef5"/><rect x="-25" y="-23" width="50" height="50" rx="6" fill="#eef6fa"/><path d="M0 -64l11 11.500h-22zM0 67l11 -11h-22zM-65 2l11 -11v22zM66 2l-12 -11v22z" fill="#daedf5"/><path d="M-17 -55A58 58 0 0 0 -42 -38M17 -55A58 58 0 0 1 42 -38" fill="none" stroke="#daedf5" stroke-width="7"/><path d="M-49 -44l11 6l-10 10zM49 -44l-11 6l10 10z" fill="#daedf5"/><path d="M-24.500 -10v36" stroke="#9aeb9a" stroke-width="1.500"/><path d="M-24.500 26h35" stroke="#ff9c9c" stroke-width="1.500"/><path d="M-24.500 26l-8 8" stroke="#2020ee" stroke-width="1.500"/><circle cx="-24.500" cy="25.500" r="1.300" fill="#18a018"/><text x="-21" y="-22" font-size="8" fill="#50d050" font-family="DejaVu Sans,sans-serif">Y</text><text x="25.700" y="26" font-size="8" fill="#ee5050" font-family="DejaVu Sans,sans-serif">X</text><text x="-36" y="39.500" font-size="8.500" fill="#1010ee" font-weight="bold" font-family="DejaVu Sans,sans-serif">Z</text><text x="0" y="5.800" text-anchor="middle" font-size="16" font-weight="bold" fill="#000" font-family="DejaVu Sans Condensed,DejaVu Sans,Liberation Sans,sans-serif" textLength="20.500" lengthAdjust="spacingAndGlyphs">TOP</text><path d="M23 47.300l10 -4l10 4v11l-10 4.500l-10 -4.500z" fill="#c3cdd2"/><path d="M33 51.300l10 -4v11l-10 4.500z" fill="#d3dde2"/><path d="M23 47.300l10 -4l10 4l-10 4z" fill="#ccd6db"/><path d="M47 50h12l-6 6z" fill="#8e9496"/></g><g transform="translate(1272.5 609.0)"><path d="M0 0V-17" stroke="#1c8a1c" stroke-width="1.800"/><path d="M0 -22l-2.800 7h5.600z" fill="#1c8a1c"/><path d="M0 0H17" stroke="#9a1c1c" stroke-width="1.800"/><path d="M22 0l-7 -2.800v5.600z" fill="#9a1c1c"/><circle cx="0" cy="0" r="2.400" fill="#1c1c8a"/><text x="2.500" y="-22" font-size="9" fill="#111" font-family="DejaVu Sans,sans-serif">Y</text><text x="2.500" y="-1" font-size="9" fill="#111" font-family="DejaVu Sans,sans-serif">Z</text><text x="24" y="0" font-size="9" fill="#111" font-family="DejaVu Sans,sans-serif">X</text></g></svg>
<div class="a" style="left:376px;top:817px;width:1306px;height:1px;background:#c4c4c4"></div>
<div class="a" style="left:376px;top:817px;width:133px;height:28px;border:1px solid #c0c0c0;border-top:none;border-radius:0 0 3px 3px;background:linear-gradient(#e6e6e6,#dcdcdc)"></div>
<svg class="a" style="left:388px;top:822px" width="16" height="16" viewBox="0 0 16 16"><path d="M1.500 1.500h9v3h-5.500v2.500h3.500v3h-3.500v5h-3.500z" fill="#d61f1f" stroke="#8a1010" stroke-width=".8"/><circle cx="10.800" cy="10.500" r="3.900" fill="#5b8bd0" stroke="#2f5ea8" stroke-width="2" stroke-dasharray="1.800 1.260"/><circle cx="10.800" cy="10.500" r="3.300" fill="#5b8bd0"/><circle cx="10.800" cy="10.500" r="1.500" fill="#eef3fa"/></svg>
<span class="t" style="left:408px;top:825px">Start page</span>
<svg class="a" style="left:479.0px;top:825.0px" width="12" height="12" viewBox="0 0 12 12"><path d="M2 2l8 8M10 2l-8 8" stroke="#8e8e8e" stroke-width="2.800" stroke-linecap="round"/><path d="M2 2l8 8M10 2l-8 8" stroke="#c4c4c4" stroke-width="1.200" stroke-linecap="round"/></svg>
<div class="a" style="left:508px;top:816px;width:167px;height:31px;border:1px solid #c0c0c0;border-top:none;border-radius:0 0 3px 3px;background:linear-gradient(#f0f0f0,#f6f6f6)"></div>
<svg class="a" style="left:520px;top:823px" width="16" height="16" viewBox="0 0 16 16"><path d="M1.500 1.500h9v3h-5.500v2.500h3.500v3h-3.500v5h-3.500z" fill="#d61f1f" stroke="#8a1010" stroke-width=".8"/><circle cx="10.800" cy="10.500" r="3.900" fill="#5b8bd0" stroke="#2f5ea8" stroke-width="2" stroke-dasharray="1.800 1.260"/><circle cx="10.800" cy="10.500" r="3.300" fill="#5b8bd0"/><circle cx="10.800" cy="10.500" r="1.500" fill="#eef3fa"/></svg>
<span class="t" style="left:540px;top:826px">Villa Savoye : 1*</span>
<svg class="a" style="left:646.0px;top:826.0px" width="12" height="12" viewBox="0 0 12 12"><path d="M2 2l8 8M10 2l-8 8" stroke="#8e8e8e" stroke-width="2.800" stroke-linecap="round"/><path d="M2 2l8 8M10 2l-8 8" stroke="#c4c4c4" stroke-width="1.200" stroke-linecap="round"/></svg>
<div class="a" style="left:832px;top:851px;width:16px;height:1px;background-image:linear-gradient(90deg,#b4b4b4 1px,transparent 1px);background-size:2px 1px"></div>
<span class="t" style="left:5px;top:857px">Selection view</span>
<svg class="a" style="left:494.0px;top:858.0px" width="11" height="11" viewBox="0 0 11 11"><rect x=".5" y=".5" width="10" height="10" rx="2.200" fill="#f1f1f1" stroke="#767676"/><rect x="4.500" y="2.500" width="4" height="4" rx=".8" fill="none" stroke="#6a6a6a" stroke-width=".9"/><rect x="2.500" y="4.500" width="4" height="4" rx=".8" fill="#f1f1f1" stroke="#6a6a6a" stroke-width=".9"/></svg>
<svg class="a" style="left:508.0px;top:858.0px" width="11" height="11" viewBox="0 0 11 11"><rect x=".5" y=".5" width="10" height="10" rx="2.200" fill="#f1f1f1" stroke="#767676"/><path d="M3 3l5 5M8 3l-5 5" stroke="#5a5a5a" stroke-width="1.900"/></svg>
<div class="inp" style="left:1px;top:873px;width:490px;height:23px;border-color:#b0b0b0">
<span class="t" style="left:3px;top:4px;color:#9a9a9a">Search</span></div>
<svg class="a" style="left:495px;top:877px" width="16" height="14" viewBox="0 0 16 14"><path d="M5.500 1.500h9v11h-9l-4.500-5.500z" fill="#f6f9fd" stroke="#3f6fb0" stroke-width="1.400" stroke-linejoin="round"/><path d="M7 4l6 6M13 4l-6 6" stroke="#8db3e2" stroke-width="2.300"/></svg>
<span class="t" style="left:513px;top:878px">8</span>
<div class="frame" style="left:1px;top:896px;width:520px;height:70px;border-color:#b8b8b8"></div>
<div class="a" style="left:2px;top:897px;width:505px;height:68px;overflow:hidden">
<span class="t" style="left:3px;top:1px">Villa_Savoye#dLabel010 (dLabel010)</span>
<span class="t" style="left:3px;top:16px">Villa_Savoye#dLabel003 (dLabel003)</span>
<span class="t" style="left:3px;top:31px">Villa_Savoye#dLabel004 (dLabel004)</span>
<span class="t" style="left:3px;top:46px">Villa_Savoye#dLabel005 (dLabel005)</span>
<span class="t" style="left:3px;top:61px">Villa_Savoye#dLabel006 (dLabel006)</span></div>
<div class="a" style="left:506px;top:897px;width:14px;height:68px;background:#e0e0e0;border-left:1px solid #bdbdbd;border-right:1px solid #c4c4c4"></div>
<div class="a" style="left:506px;top:897px;width:14px;height:14px;background:linear-gradient(90deg,#fdfdfd,#f1f1f1);border:1px solid #bdbdbd;border-top:none"></div>
<div class="a" style="left:506px;top:951px;width:14px;height:14px;background:linear-gradient(90deg,#fdfdfd,#f1f1f1);border:1px solid #bdbdbd;border-bottom:none"></div>
<div class="a" style="left:506px;top:910px;width:14px;height:28px;background:linear-gradient(90deg,#ffffff,#eeeeee);border:1px solid #bdbdbd"></div>
<div class="a" style="left:509.0px;top:902.0px;width:0;height:0;border-left:4px solid transparent;border-right:4px solid transparent;border-bottom:4px solid #555"></div>
<div class="a" style="left:509.0px;top:956.0px;width:0;height:0;border-left:4px solid transparent;border-right:4px solid transparent;border-top:4px solid #555"></div>
<div class="a" style="left:2px;top:970px;width:13px;height:13px;border:1px solid #b4b4b4;border-radius:2px;background:#fff"></div>
<span class="t" style="left:20px;top:970px">Picked object list</span>
<div class="a" style="left:524px;top:915px;width:1px;height:16px;background-image:linear-gradient(#b4b4b4 1px,transparent 1px);background-size:1px 2px"></div>
<div class="a" style="left:1149px;top:915px;width:1px;height:16px;background-image:linear-gradient(#b4b4b4 1px,transparent 1px);background-size:1px 2px"></div>
<span class="t" style="left:531px;top:857px">Python console</span>
<svg class="a" style="left:1120.0px;top:858.0px" width="11" height="11" viewBox="0 0 11 11"><rect x=".5" y=".5" width="10" height="10" rx="2.200" fill="#f1f1f1" stroke="#767676"/><rect x="4.500" y="2.500" width="4" height="4" rx=".8" fill="none" stroke="#6a6a6a" stroke-width=".9"/><rect x="2.500" y="4.500" width="4" height="4" rx=".8" fill="#f1f1f1" stroke="#6a6a6a" stroke-width=".9"/></svg>
<svg class="a" style="left:1134.0px;top:858.0px" width="11" height="11" viewBox="0 0 11 11"><rect x=".5" y=".5" width="10" height="10" rx="2.200" fill="#f1f1f1" stroke="#767676"/><path d="M3 3l5 5M8 3l-5 5" stroke="#5a5a5a" stroke-width="1.900"/></svg>
<div class="frame" style="left:527px;top:873px;width:620px;height:114px;border-color:#b8b8b8"></div>
<div class="a" style="left:528px;top:874px;width:604px;height:112px;overflow:hidden;font-size:13px;letter-spacing:0.045px">
<span class="t" style="left:4px;top:0.6px"><span style="color:#9a9a9a">&gt;&gt;&gt; </span>FreeCADGui<span style="color:#9a9a9a">.</span>getDocument<span style="color:#9a9a9a">(</span><span style="color:#ff0000">'Villa_Savoye'</span><span style="color:#9a9a9a">).</span>getObject<span style="color:#9a9a9a">(</span><span style="color:#ff0000">'dLabel008'</span><span style="color:#9a9a9a">).</span>TextFont <span style="color:#9a9a9a">=</span> <span style="color:#ff0000">"Source</span></span>
<span class="t" style="left:4px;top:15.5px;color:#ff0000">Code Pro Black"</span>
<span class="t" style="left:4px;top:32.8px"><span style="color:#9a9a9a">&gt;&gt;&gt; </span>FreeCADGui<span style="color:#9a9a9a">.</span>getDocument<span style="color:#9a9a9a">(</span><span style="color:#ff0000">'Villa_Savoye'</span><span style="color:#9a9a9a">).</span>getObject<span style="color:#9a9a9a">(</span><span style="color:#ff0000">'dLabel009'</span><span style="color:#9a9a9a">).</span>TextFont <span style="color:#9a9a9a">=</span> <span style="color:#ff0000">"Source</span></span>
<span class="t" style="left:4px;top:47.7px;color:#ff0000">Code Pro Black"</span>
<span class="t" style="left:4px;top:64.7px"><span style="color:#9a9a9a">&gt;&gt;&gt; </span></span>
<span class="t" style="left:4px;top:81.5px"><span style="color:#9a9a9a">&gt;&gt;&gt; </span></span></div>
<div class="a" style="left:1132px;top:874px;width:14px;height:112px;background:#e0e0e0;border-left:1px solid #bdbdbd;border-right:1px solid #c4c4c4"></div>
<div class="a" style="left:1132px;top:874px;width:14px;height:14px;background:linear-gradient(90deg,#fdfdfd,#f1f1f1);border:1px solid #bdbdbd;border-top:none"></div>
<div class="a" style="left:1132px;top:972px;width:14px;height:14px;background:linear-gradient(90deg,#fdfdfd,#f1f1f1);border:1px solid #bdbdbd;border-bottom:none"></div>
<div class="a" style="left:1132px;top:945px;width:14px;height:28px;background:linear-gradient(90deg,#ffffff,#eeeeee);border:1px solid #bdbdbd"></div>
<div class="a" style="left:1135.0px;top:879.0px;width:0;height:0;border-left:4px solid transparent;border-right:4px solid transparent;border-bottom:4px solid #555"></div>
<div class="a" style="left:1135.0px;top:977.0px;width:0;height:0;border-left:4px solid transparent;border-right:4px solid transparent;border-top:4px solid #555"></div>
<span class="t" style="left:1157px;top:857px">Report view</span>
<svg class="a" style="left:1654.0px;top:858.0px" width="11" height="11" viewBox="0 0 11 11"><rect x=".5" y=".5" width="10" height="10" rx="2.200" fill="#f1f1f1" stroke="#767676"/><rect x="4.500" y="2.500" width="4" height="4" rx=".8" fill="none" stroke="#6a6a6a" stroke-width=".9"/><rect x="2.500" y="4.500" width="4" height="4" rx=".8" fill="#f1f1f1" stroke="#6a6a6a" stroke-width=".9"/></svg>
<svg class="a" style="left:1668.0px;top:858.0px" width="11" height="11" viewBox="0 0 11 11"><rect x=".5" y=".5" width="10" height="10" rx="2.200" fill="#f1f1f1" stroke="#767676"/><path d="M3 3l5 5M8 3l-5 5" stroke="#5a5a5a" stroke-width="1.900"/></svg>
<div class="frame" style="left:1153px;top:873px;width:1528px;height:114px;border-color:#b8b8b8;width:528px"></div>
<div class="a" style="left:1154px;top:874px;width:512px;height:112px;overflow:hidden;font-size:13px;letter-spacing:0.03px">
<span class="t" style="left:4px;top:-6px">onChanged() - End</span>
<span class="t" style="left:4px;top:11px">ArchSketch__2F_Table_02  going through onBeforeChange()</span>
<span class="t" style="left:4px;top:28px">ArchSketch051</span>
<span class="t" style="left:4px;top:45px"> : Debug: ArchSketch.onChanged Change property: Placement</span>
<span class="t" style="left:4px;top:62px"></span>
<span class="t" style="left:4px;top:79px">onChanged() - End</span></div>
<div class="a" style="left:1666px;top:874px;width:14px;height:112px;background:#e0e0e0;border-left:1px solid #bdbdbd;border-right:1px solid #c4c4c4"></div>
<div class="a" style="left:1666px;top:874px;width:14px;height:14px;background:linear-gradient(90deg,#fdfdfd,#f1f1f1);border:1px solid #bdbdbd;border-top:none"></div>
<div class="a" style="left:1666px;top:972px;width:14px;height:14px;background:linear-gradient(90deg,#fdfdfd,#f1f1f1);border:1px solid #bdbdbd;border-bottom:none"></div>
<div class="a" style="left:1666px;top:945px;width:14px;height:28px;background:linear-gradient(90deg,#ffffff,#eeeeee);border:1px solid #bdbdbd"></div>
<div class="a" style="left:1669.0px;top:879.0px;width:0;height:0;border-left:4px solid transparent;border-right:4px solid transparent;border-bottom:4px solid #555"></div>
<div class="a" style="left:1669.0px;top:977.0px;width:0;height:0;border-left:4px solid transparent;border-right:4px solid transparent;border-top:4px solid #555"></div>
<span class="t" style="left:3px;top:1000px">Preselected: Villa_Savoye.Wall001.Edge11 (0, 4741.9, 7050)</span>
<svg class="a" style="left:1446px;top:999px" width="10" height="14" viewBox="0 0 10 14"><rect x="1" y="1" width="8" height="12" rx="3" fill="#fff" stroke="#222" stroke-width="1.300"/><path d="M5 3v3" stroke="#222" stroke-width="1.300"/></svg>
<span class="t" style="left:1460px;top:1000px">CAD</span>
<div class="a" style="left:1494.0px;top:1005.0px;width:0;height:0;border-left:3px solid transparent;border-right:3px solid transparent;border-top:3px solid #666"></div>
<span class="t" style="left:1511px;top:1000px">7937.46 mm x 3898.78 mm</span>
<div class="wb"></div></div></body></html>
